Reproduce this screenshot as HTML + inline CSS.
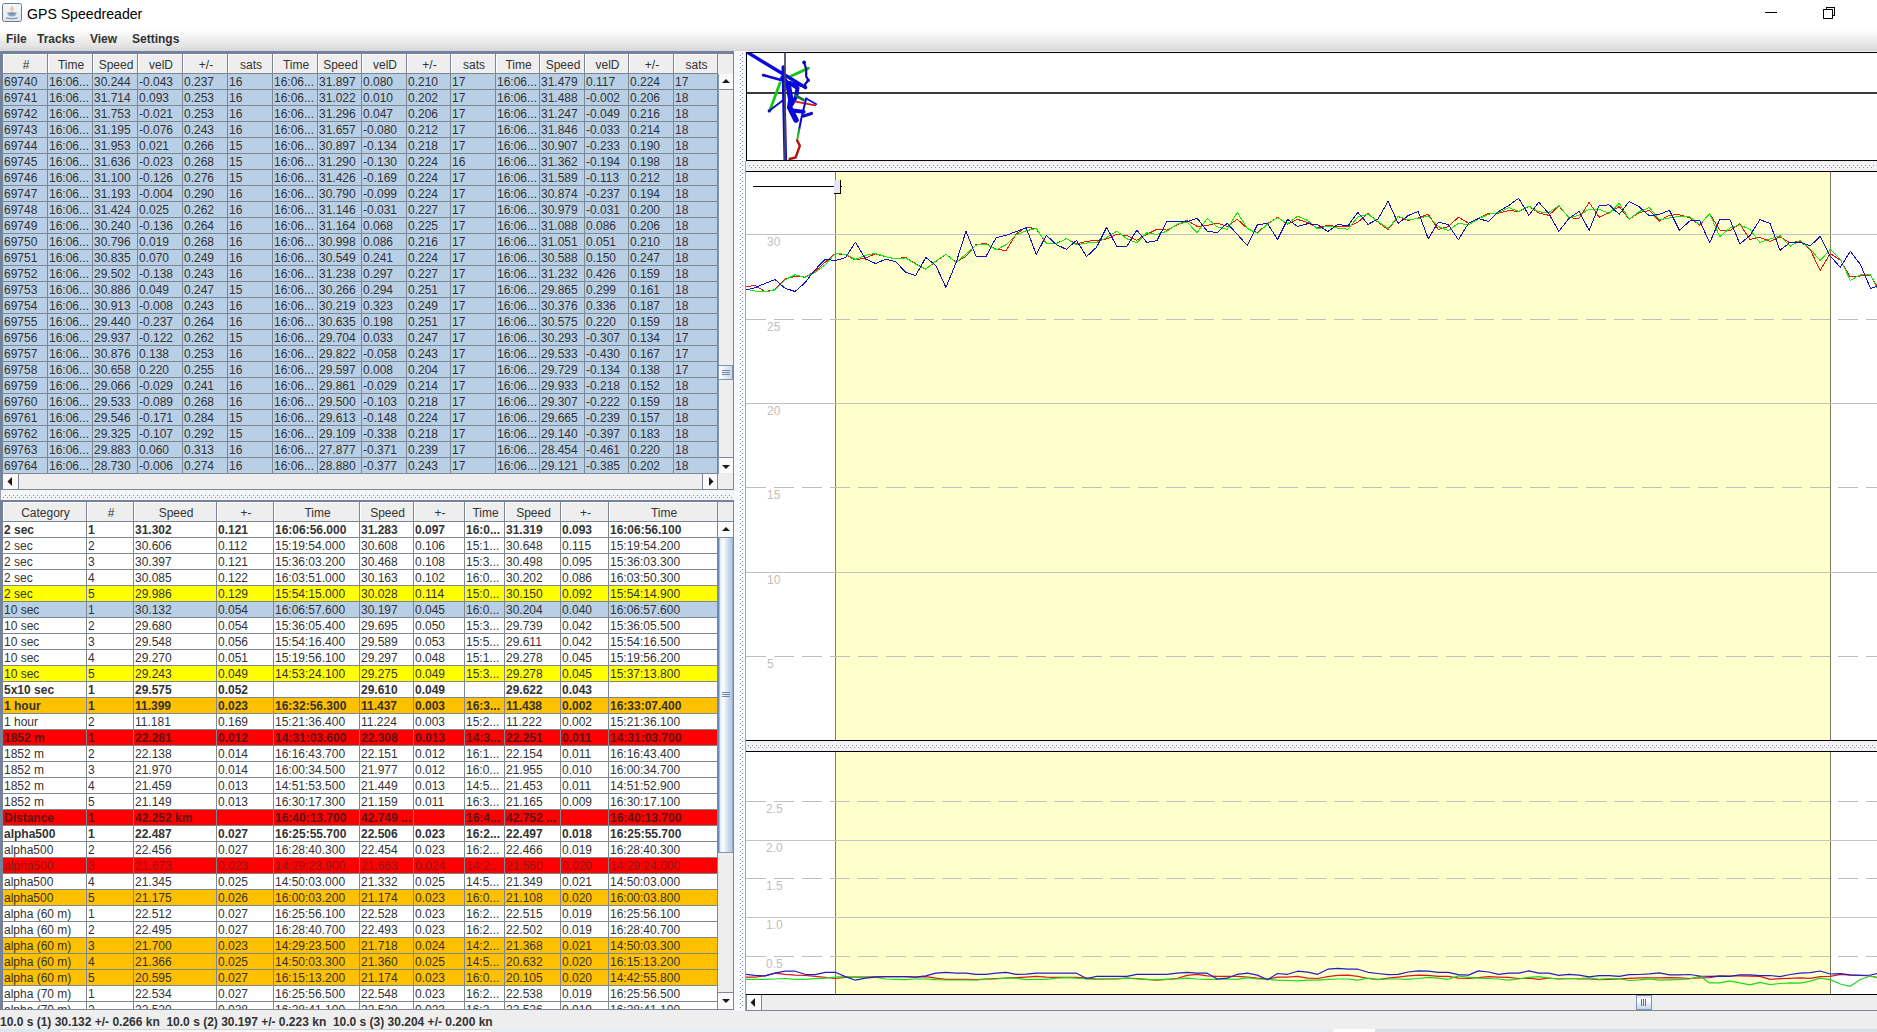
<!DOCTYPE html><html><head><meta charset="utf-8"><title>GPS Speedreader</title><style>

html,body{margin:0;padding:0}
body{width:1877px;height:1032px;overflow:hidden;background:#eeeeee;position:relative;font-family:"Liberation Sans",Arial,sans-serif;font-size:12px;color:#333}
.a{position:absolute}
.c{position:absolute;height:15px;line-height:17px;white-space:nowrap;overflow:hidden;box-sizing:border-box;padding-left:1px}
.h{position:absolute;height:19px;line-height:19px;padding-top:1px;padding-left:1px;text-align:center;white-space:nowrap;overflow:hidden;background:#eee;box-sizing:border-box;border-left:1px solid #fff;border-top:1px solid #fff}
.b{font-weight:bold}
.row{position:absolute;left:3px;height:15px}
.menu{font-weight:bold;position:absolute;top:32px;height:14px;line-height:14px}
.lbl{position:absolute;color:#c0c0c0;font-size:12px;line-height:12px}

</style></head><body>
<div class="a" style="left:0;top:0;width:1877px;height:27px;background:#fff"></div>
<svg class="a" style="left:2px;top:3px" width="20" height="19" viewBox="0 0 20 19">
<defs><linearGradient id="ig" x1="0" y1="0" x2="0" y2="1"><stop offset="0" stop-color="#f6fafd"/><stop offset="1" stop-color="#dde7f1"/></linearGradient></defs>
<rect x="0.5" y="0.5" width="19" height="18" rx="2" fill="url(#ig)" stroke="#6f7a86"/>
<path d="M10.6 2.6 C7.6 4.6 7.8 6.4 9.2 9 C12 8.4 12.800 5.600 10.600 2.600Z" fill="#f0caa4"/>
<path d="M5.2 9.6 Q10 8.6 14.6 9.600 Q14.200 13.500 10 13.500 Q5.600 13.500 5.200 9.600 Z" fill="#8fa6bf"/>
<path d="M6.5 10.6 Q10 9.800 13.400 10.600 Q10 12.200 6.500 10.600Z" fill="#6f8296"/>
<path d="M4 14.8 Q10 16.4 15.600 14.800" stroke="#8796a6" stroke-width="1.3" fill="none"/>
</svg>
<div class="a" style="left:27px;top:4px;font-size:15.5px;line-height:20px;color:#000;transform:scaleX(0.91);transform-origin:0 0" id="title">GPS Speedreader</div>
<div class="a" style="left:1765px;top:12px;width:12px;height:1px;background:#000"></div>
<div class="a" style="left:1823px;top:9px;width:8px;height:8px;border:1px solid #000;box-sizing:content-box;background:#fff;z-index:2"></div>
<div class="a" style="left:1826px;top:7px;width:7px;height:7px;border:1px solid #000;box-sizing:content-box;background:#fff;z-index:1"></div>
<div class="a" style="left:0;top:27px;width:1877px;height:23px;background:linear-gradient(#ffffff 0%,#fafafa 25%,#e2e2e2 85%,#d8d8d8 100%)"></div>
<div class="a" style="left:0;top:50px;width:1877px;height:1px;background:#d4d8e0"></div>
<div class="menu" style="left:6px">File</div>
<div class="menu" style="left:37px">Tracks</div>
<div class="menu" style="left:90px">View</div>
<div class="menu" style="left:132px">Settings</div>
<div class="a" style="left:0;top:51px;width:734px;height:439px;background:#75839a"></div>
<div class="a" style="left:3px;top:54px;width:715px;height:420px;background:#7c8791"></div>
<div class="h" style="left:3px;top:54px;width:44px">#</div>
<div class="h" style="left:48px;top:54px;width:44px">Time</div>
<div class="h" style="left:93px;top:54px;width:44px">Speed</div>
<div class="h" style="left:138px;top:54px;width:44px">velD</div>
<div class="h" style="left:183px;top:54px;width:44px">+/-</div>
<div class="h" style="left:228px;top:54px;width:44px">sats</div>
<div class="h" style="left:273px;top:54px;width:44px">Time</div>
<div class="h" style="left:318px;top:54px;width:43px">Speed</div>
<div class="h" style="left:362px;top:54px;width:44px">velD</div>
<div class="h" style="left:407px;top:54px;width:43px">+/-</div>
<div class="h" style="left:451px;top:54px;width:44px">sats</div>
<div class="h" style="left:496px;top:54px;width:43px">Time</div>
<div class="h" style="left:540px;top:54px;width:44px">Speed</div>
<div class="h" style="left:585px;top:54px;width:43px">velD</div>
<div class="h" style="left:629px;top:54px;width:44px">+/-</div>
<div class="h" style="left:674px;top:54px;width:43px">sats</div>
<div class="a" style="left:718px;top:54px;width:16px;height:20px;background:#eee"></div>
<div class="c" style="left:3px;top:74px;width:44px;background:#b8cfe5">69740</div>
<div class="c" style="left:48px;top:74px;width:44px;background:#b8cfe5">16:06...</div>
<div class="c" style="left:93px;top:74px;width:44px;background:#b8cfe5">30.244</div>
<div class="c" style="left:138px;top:74px;width:44px;background:#b8cfe5">-0.043</div>
<div class="c" style="left:183px;top:74px;width:44px;background:#b8cfe5">0.237</div>
<div class="c" style="left:228px;top:74px;width:44px;background:#b8cfe5">16</div>
<div class="c" style="left:273px;top:74px;width:44px;background:#b8cfe5">16:06...</div>
<div class="c" style="left:318px;top:74px;width:43px;background:#b8cfe5">31.897</div>
<div class="c" style="left:362px;top:74px;width:44px;background:#b8cfe5">0.080</div>
<div class="c" style="left:407px;top:74px;width:43px;background:#b8cfe5">0.210</div>
<div class="c" style="left:451px;top:74px;width:44px;background:#b8cfe5">17</div>
<div class="c" style="left:496px;top:74px;width:43px;background:#b8cfe5">16:06...</div>
<div class="c" style="left:540px;top:74px;width:44px;background:#b8cfe5">31.479</div>
<div class="c" style="left:585px;top:74px;width:43px;background:#b8cfe5">0.117</div>
<div class="c" style="left:629px;top:74px;width:44px;background:#b8cfe5">0.224</div>
<div class="c" style="left:674px;top:74px;width:43px;background:#b8cfe5">17</div>
<div class="c" style="left:3px;top:90px;width:44px;background:#b8cfe5">69741</div>
<div class="c" style="left:48px;top:90px;width:44px;background:#b8cfe5">16:06...</div>
<div class="c" style="left:93px;top:90px;width:44px;background:#b8cfe5">31.714</div>
<div class="c" style="left:138px;top:90px;width:44px;background:#b8cfe5">0.093</div>
<div class="c" style="left:183px;top:90px;width:44px;background:#b8cfe5">0.253</div>
<div class="c" style="left:228px;top:90px;width:44px;background:#b8cfe5">16</div>
<div class="c" style="left:273px;top:90px;width:44px;background:#b8cfe5">16:06...</div>
<div class="c" style="left:318px;top:90px;width:43px;background:#b8cfe5">31.022</div>
<div class="c" style="left:362px;top:90px;width:44px;background:#b8cfe5">0.010</div>
<div class="c" style="left:407px;top:90px;width:43px;background:#b8cfe5">0.202</div>
<div class="c" style="left:451px;top:90px;width:44px;background:#b8cfe5">17</div>
<div class="c" style="left:496px;top:90px;width:43px;background:#b8cfe5">16:06...</div>
<div class="c" style="left:540px;top:90px;width:44px;background:#b8cfe5">31.488</div>
<div class="c" style="left:585px;top:90px;width:43px;background:#b8cfe5">-0.002</div>
<div class="c" style="left:629px;top:90px;width:44px;background:#b8cfe5">0.206</div>
<div class="c" style="left:674px;top:90px;width:43px;background:#b8cfe5">18</div>
<div class="c" style="left:3px;top:106px;width:44px;background:#b8cfe5">69742</div>
<div class="c" style="left:48px;top:106px;width:44px;background:#b8cfe5">16:06...</div>
<div class="c" style="left:93px;top:106px;width:44px;background:#b8cfe5">31.753</div>
<div class="c" style="left:138px;top:106px;width:44px;background:#b8cfe5">-0.021</div>
<div class="c" style="left:183px;top:106px;width:44px;background:#b8cfe5">0.253</div>
<div class="c" style="left:228px;top:106px;width:44px;background:#b8cfe5">16</div>
<div class="c" style="left:273px;top:106px;width:44px;background:#b8cfe5">16:06...</div>
<div class="c" style="left:318px;top:106px;width:43px;background:#b8cfe5">31.296</div>
<div class="c" style="left:362px;top:106px;width:44px;background:#b8cfe5">0.047</div>
<div class="c" style="left:407px;top:106px;width:43px;background:#b8cfe5">0.206</div>
<div class="c" style="left:451px;top:106px;width:44px;background:#b8cfe5">17</div>
<div class="c" style="left:496px;top:106px;width:43px;background:#b8cfe5">16:06...</div>
<div class="c" style="left:540px;top:106px;width:44px;background:#b8cfe5">31.247</div>
<div class="c" style="left:585px;top:106px;width:43px;background:#b8cfe5">-0.049</div>
<div class="c" style="left:629px;top:106px;width:44px;background:#b8cfe5">0.216</div>
<div class="c" style="left:674px;top:106px;width:43px;background:#b8cfe5">18</div>
<div class="c" style="left:3px;top:122px;width:44px;background:#b8cfe5">69743</div>
<div class="c" style="left:48px;top:122px;width:44px;background:#b8cfe5">16:06...</div>
<div class="c" style="left:93px;top:122px;width:44px;background:#b8cfe5">31.195</div>
<div class="c" style="left:138px;top:122px;width:44px;background:#b8cfe5">-0.076</div>
<div class="c" style="left:183px;top:122px;width:44px;background:#b8cfe5">0.243</div>
<div class="c" style="left:228px;top:122px;width:44px;background:#b8cfe5">16</div>
<div class="c" style="left:273px;top:122px;width:44px;background:#b8cfe5">16:06...</div>
<div class="c" style="left:318px;top:122px;width:43px;background:#b8cfe5">31.657</div>
<div class="c" style="left:362px;top:122px;width:44px;background:#b8cfe5">-0.080</div>
<div class="c" style="left:407px;top:122px;width:43px;background:#b8cfe5">0.212</div>
<div class="c" style="left:451px;top:122px;width:44px;background:#b8cfe5">17</div>
<div class="c" style="left:496px;top:122px;width:43px;background:#b8cfe5">16:06...</div>
<div class="c" style="left:540px;top:122px;width:44px;background:#b8cfe5">31.846</div>
<div class="c" style="left:585px;top:122px;width:43px;background:#b8cfe5">-0.033</div>
<div class="c" style="left:629px;top:122px;width:44px;background:#b8cfe5">0.214</div>
<div class="c" style="left:674px;top:122px;width:43px;background:#b8cfe5">18</div>
<div class="c" style="left:3px;top:138px;width:44px;background:#b8cfe5">69744</div>
<div class="c" style="left:48px;top:138px;width:44px;background:#b8cfe5">16:06...</div>
<div class="c" style="left:93px;top:138px;width:44px;background:#b8cfe5">31.953</div>
<div class="c" style="left:138px;top:138px;width:44px;background:#b8cfe5">0.021</div>
<div class="c" style="left:183px;top:138px;width:44px;background:#b8cfe5">0.266</div>
<div class="c" style="left:228px;top:138px;width:44px;background:#b8cfe5">15</div>
<div class="c" style="left:273px;top:138px;width:44px;background:#b8cfe5">16:06...</div>
<div class="c" style="left:318px;top:138px;width:43px;background:#b8cfe5">30.897</div>
<div class="c" style="left:362px;top:138px;width:44px;background:#b8cfe5">-0.134</div>
<div class="c" style="left:407px;top:138px;width:43px;background:#b8cfe5">0.218</div>
<div class="c" style="left:451px;top:138px;width:44px;background:#b8cfe5">17</div>
<div class="c" style="left:496px;top:138px;width:43px;background:#b8cfe5">16:06...</div>
<div class="c" style="left:540px;top:138px;width:44px;background:#b8cfe5">30.907</div>
<div class="c" style="left:585px;top:138px;width:43px;background:#b8cfe5">-0.233</div>
<div class="c" style="left:629px;top:138px;width:44px;background:#b8cfe5">0.190</div>
<div class="c" style="left:674px;top:138px;width:43px;background:#b8cfe5">18</div>
<div class="c" style="left:3px;top:154px;width:44px;background:#b8cfe5">69745</div>
<div class="c" style="left:48px;top:154px;width:44px;background:#b8cfe5">16:06...</div>
<div class="c" style="left:93px;top:154px;width:44px;background:#b8cfe5">31.636</div>
<div class="c" style="left:138px;top:154px;width:44px;background:#b8cfe5">-0.023</div>
<div class="c" style="left:183px;top:154px;width:44px;background:#b8cfe5">0.268</div>
<div class="c" style="left:228px;top:154px;width:44px;background:#b8cfe5">15</div>
<div class="c" style="left:273px;top:154px;width:44px;background:#b8cfe5">16:06...</div>
<div class="c" style="left:318px;top:154px;width:43px;background:#b8cfe5">31.290</div>
<div class="c" style="left:362px;top:154px;width:44px;background:#b8cfe5">-0.130</div>
<div class="c" style="left:407px;top:154px;width:43px;background:#b8cfe5">0.224</div>
<div class="c" style="left:451px;top:154px;width:44px;background:#b8cfe5">16</div>
<div class="c" style="left:496px;top:154px;width:43px;background:#b8cfe5">16:06...</div>
<div class="c" style="left:540px;top:154px;width:44px;background:#b8cfe5">31.362</div>
<div class="c" style="left:585px;top:154px;width:43px;background:#b8cfe5">-0.194</div>
<div class="c" style="left:629px;top:154px;width:44px;background:#b8cfe5">0.198</div>
<div class="c" style="left:674px;top:154px;width:43px;background:#b8cfe5">18</div>
<div class="c" style="left:3px;top:170px;width:44px;background:#b8cfe5">69746</div>
<div class="c" style="left:48px;top:170px;width:44px;background:#b8cfe5">16:06...</div>
<div class="c" style="left:93px;top:170px;width:44px;background:#b8cfe5">31.100</div>
<div class="c" style="left:138px;top:170px;width:44px;background:#b8cfe5">-0.126</div>
<div class="c" style="left:183px;top:170px;width:44px;background:#b8cfe5">0.276</div>
<div class="c" style="left:228px;top:170px;width:44px;background:#b8cfe5">15</div>
<div class="c" style="left:273px;top:170px;width:44px;background:#b8cfe5">16:06...</div>
<div class="c" style="left:318px;top:170px;width:43px;background:#b8cfe5">31.426</div>
<div class="c" style="left:362px;top:170px;width:44px;background:#b8cfe5">-0.169</div>
<div class="c" style="left:407px;top:170px;width:43px;background:#b8cfe5">0.224</div>
<div class="c" style="left:451px;top:170px;width:44px;background:#b8cfe5">17</div>
<div class="c" style="left:496px;top:170px;width:43px;background:#b8cfe5">16:06...</div>
<div class="c" style="left:540px;top:170px;width:44px;background:#b8cfe5">31.589</div>
<div class="c" style="left:585px;top:170px;width:43px;background:#b8cfe5">-0.113</div>
<div class="c" style="left:629px;top:170px;width:44px;background:#b8cfe5">0.212</div>
<div class="c" style="left:674px;top:170px;width:43px;background:#b8cfe5">18</div>
<div class="c" style="left:3px;top:186px;width:44px;background:#b8cfe5">69747</div>
<div class="c" style="left:48px;top:186px;width:44px;background:#b8cfe5">16:06...</div>
<div class="c" style="left:93px;top:186px;width:44px;background:#b8cfe5">31.193</div>
<div class="c" style="left:138px;top:186px;width:44px;background:#b8cfe5">-0.004</div>
<div class="c" style="left:183px;top:186px;width:44px;background:#b8cfe5">0.290</div>
<div class="c" style="left:228px;top:186px;width:44px;background:#b8cfe5">16</div>
<div class="c" style="left:273px;top:186px;width:44px;background:#b8cfe5">16:06...</div>
<div class="c" style="left:318px;top:186px;width:43px;background:#b8cfe5">30.790</div>
<div class="c" style="left:362px;top:186px;width:44px;background:#b8cfe5">-0.099</div>
<div class="c" style="left:407px;top:186px;width:43px;background:#b8cfe5">0.224</div>
<div class="c" style="left:451px;top:186px;width:44px;background:#b8cfe5">17</div>
<div class="c" style="left:496px;top:186px;width:43px;background:#b8cfe5">16:06...</div>
<div class="c" style="left:540px;top:186px;width:44px;background:#b8cfe5">30.874</div>
<div class="c" style="left:585px;top:186px;width:43px;background:#b8cfe5">-0.237</div>
<div class="c" style="left:629px;top:186px;width:44px;background:#b8cfe5">0.194</div>
<div class="c" style="left:674px;top:186px;width:43px;background:#b8cfe5">18</div>
<div class="c" style="left:3px;top:202px;width:44px;background:#b8cfe5">69748</div>
<div class="c" style="left:48px;top:202px;width:44px;background:#b8cfe5">16:06...</div>
<div class="c" style="left:93px;top:202px;width:44px;background:#b8cfe5">31.424</div>
<div class="c" style="left:138px;top:202px;width:44px;background:#b8cfe5">0.025</div>
<div class="c" style="left:183px;top:202px;width:44px;background:#b8cfe5">0.262</div>
<div class="c" style="left:228px;top:202px;width:44px;background:#b8cfe5">16</div>
<div class="c" style="left:273px;top:202px;width:44px;background:#b8cfe5">16:06...</div>
<div class="c" style="left:318px;top:202px;width:43px;background:#b8cfe5">31.146</div>
<div class="c" style="left:362px;top:202px;width:44px;background:#b8cfe5">-0.031</div>
<div class="c" style="left:407px;top:202px;width:43px;background:#b8cfe5">0.227</div>
<div class="c" style="left:451px;top:202px;width:44px;background:#b8cfe5">17</div>
<div class="c" style="left:496px;top:202px;width:43px;background:#b8cfe5">16:06...</div>
<div class="c" style="left:540px;top:202px;width:44px;background:#b8cfe5">30.979</div>
<div class="c" style="left:585px;top:202px;width:43px;background:#b8cfe5">-0.031</div>
<div class="c" style="left:629px;top:202px;width:44px;background:#b8cfe5">0.200</div>
<div class="c" style="left:674px;top:202px;width:43px;background:#b8cfe5">18</div>
<div class="c" style="left:3px;top:218px;width:44px;background:#b8cfe5">69749</div>
<div class="c" style="left:48px;top:218px;width:44px;background:#b8cfe5">16:06...</div>
<div class="c" style="left:93px;top:218px;width:44px;background:#b8cfe5">30.240</div>
<div class="c" style="left:138px;top:218px;width:44px;background:#b8cfe5">-0.136</div>
<div class="c" style="left:183px;top:218px;width:44px;background:#b8cfe5">0.264</div>
<div class="c" style="left:228px;top:218px;width:44px;background:#b8cfe5">16</div>
<div class="c" style="left:273px;top:218px;width:44px;background:#b8cfe5">16:06...</div>
<div class="c" style="left:318px;top:218px;width:43px;background:#b8cfe5">31.164</div>
<div class="c" style="left:362px;top:218px;width:44px;background:#b8cfe5">0.068</div>
<div class="c" style="left:407px;top:218px;width:43px;background:#b8cfe5">0.225</div>
<div class="c" style="left:451px;top:218px;width:44px;background:#b8cfe5">17</div>
<div class="c" style="left:496px;top:218px;width:43px;background:#b8cfe5">16:06...</div>
<div class="c" style="left:540px;top:218px;width:44px;background:#b8cfe5">31.088</div>
<div class="c" style="left:585px;top:218px;width:43px;background:#b8cfe5">0.086</div>
<div class="c" style="left:629px;top:218px;width:44px;background:#b8cfe5">0.206</div>
<div class="c" style="left:674px;top:218px;width:43px;background:#b8cfe5">18</div>
<div class="c" style="left:3px;top:234px;width:44px;background:#b8cfe5">69750</div>
<div class="c" style="left:48px;top:234px;width:44px;background:#b8cfe5">16:06...</div>
<div class="c" style="left:93px;top:234px;width:44px;background:#b8cfe5">30.796</div>
<div class="c" style="left:138px;top:234px;width:44px;background:#b8cfe5">0.019</div>
<div class="c" style="left:183px;top:234px;width:44px;background:#b8cfe5">0.268</div>
<div class="c" style="left:228px;top:234px;width:44px;background:#b8cfe5">16</div>
<div class="c" style="left:273px;top:234px;width:44px;background:#b8cfe5">16:06...</div>
<div class="c" style="left:318px;top:234px;width:43px;background:#b8cfe5">30.998</div>
<div class="c" style="left:362px;top:234px;width:44px;background:#b8cfe5">0.086</div>
<div class="c" style="left:407px;top:234px;width:43px;background:#b8cfe5">0.216</div>
<div class="c" style="left:451px;top:234px;width:44px;background:#b8cfe5">17</div>
<div class="c" style="left:496px;top:234px;width:43px;background:#b8cfe5">16:06...</div>
<div class="c" style="left:540px;top:234px;width:44px;background:#b8cfe5">31.051</div>
<div class="c" style="left:585px;top:234px;width:43px;background:#b8cfe5">0.051</div>
<div class="c" style="left:629px;top:234px;width:44px;background:#b8cfe5">0.210</div>
<div class="c" style="left:674px;top:234px;width:43px;background:#b8cfe5">18</div>
<div class="c" style="left:3px;top:250px;width:44px;background:#b8cfe5">69751</div>
<div class="c" style="left:48px;top:250px;width:44px;background:#b8cfe5">16:06...</div>
<div class="c" style="left:93px;top:250px;width:44px;background:#b8cfe5">30.835</div>
<div class="c" style="left:138px;top:250px;width:44px;background:#b8cfe5">0.070</div>
<div class="c" style="left:183px;top:250px;width:44px;background:#b8cfe5">0.249</div>
<div class="c" style="left:228px;top:250px;width:44px;background:#b8cfe5">16</div>
<div class="c" style="left:273px;top:250px;width:44px;background:#b8cfe5">16:06...</div>
<div class="c" style="left:318px;top:250px;width:43px;background:#b8cfe5">30.549</div>
<div class="c" style="left:362px;top:250px;width:44px;background:#b8cfe5">0.241</div>
<div class="c" style="left:407px;top:250px;width:43px;background:#b8cfe5">0.224</div>
<div class="c" style="left:451px;top:250px;width:44px;background:#b8cfe5">17</div>
<div class="c" style="left:496px;top:250px;width:43px;background:#b8cfe5">16:06...</div>
<div class="c" style="left:540px;top:250px;width:44px;background:#b8cfe5">30.588</div>
<div class="c" style="left:585px;top:250px;width:43px;background:#b8cfe5">0.150</div>
<div class="c" style="left:629px;top:250px;width:44px;background:#b8cfe5">0.247</div>
<div class="c" style="left:674px;top:250px;width:43px;background:#b8cfe5">18</div>
<div class="c" style="left:3px;top:266px;width:44px;background:#b8cfe5">69752</div>
<div class="c" style="left:48px;top:266px;width:44px;background:#b8cfe5">16:06...</div>
<div class="c" style="left:93px;top:266px;width:44px;background:#b8cfe5">29.502</div>
<div class="c" style="left:138px;top:266px;width:44px;background:#b8cfe5">-0.138</div>
<div class="c" style="left:183px;top:266px;width:44px;background:#b8cfe5">0.243</div>
<div class="c" style="left:228px;top:266px;width:44px;background:#b8cfe5">16</div>
<div class="c" style="left:273px;top:266px;width:44px;background:#b8cfe5">16:06...</div>
<div class="c" style="left:318px;top:266px;width:43px;background:#b8cfe5">31.238</div>
<div class="c" style="left:362px;top:266px;width:44px;background:#b8cfe5">0.297</div>
<div class="c" style="left:407px;top:266px;width:43px;background:#b8cfe5">0.227</div>
<div class="c" style="left:451px;top:266px;width:44px;background:#b8cfe5">17</div>
<div class="c" style="left:496px;top:266px;width:43px;background:#b8cfe5">16:06...</div>
<div class="c" style="left:540px;top:266px;width:44px;background:#b8cfe5">31.232</div>
<div class="c" style="left:585px;top:266px;width:43px;background:#b8cfe5">0.426</div>
<div class="c" style="left:629px;top:266px;width:44px;background:#b8cfe5">0.159</div>
<div class="c" style="left:674px;top:266px;width:43px;background:#b8cfe5">18</div>
<div class="c" style="left:3px;top:282px;width:44px;background:#b8cfe5">69753</div>
<div class="c" style="left:48px;top:282px;width:44px;background:#b8cfe5">16:06...</div>
<div class="c" style="left:93px;top:282px;width:44px;background:#b8cfe5">30.886</div>
<div class="c" style="left:138px;top:282px;width:44px;background:#b8cfe5">0.049</div>
<div class="c" style="left:183px;top:282px;width:44px;background:#b8cfe5">0.247</div>
<div class="c" style="left:228px;top:282px;width:44px;background:#b8cfe5">15</div>
<div class="c" style="left:273px;top:282px;width:44px;background:#b8cfe5">16:06...</div>
<div class="c" style="left:318px;top:282px;width:43px;background:#b8cfe5">30.266</div>
<div class="c" style="left:362px;top:282px;width:44px;background:#b8cfe5">0.294</div>
<div class="c" style="left:407px;top:282px;width:43px;background:#b8cfe5">0.251</div>
<div class="c" style="left:451px;top:282px;width:44px;background:#b8cfe5">17</div>
<div class="c" style="left:496px;top:282px;width:43px;background:#b8cfe5">16:06...</div>
<div class="c" style="left:540px;top:282px;width:44px;background:#b8cfe5">29.865</div>
<div class="c" style="left:585px;top:282px;width:43px;background:#b8cfe5">0.299</div>
<div class="c" style="left:629px;top:282px;width:44px;background:#b8cfe5">0.161</div>
<div class="c" style="left:674px;top:282px;width:43px;background:#b8cfe5">18</div>
<div class="c" style="left:3px;top:298px;width:44px;background:#b8cfe5">69754</div>
<div class="c" style="left:48px;top:298px;width:44px;background:#b8cfe5">16:06...</div>
<div class="c" style="left:93px;top:298px;width:44px;background:#b8cfe5">30.913</div>
<div class="c" style="left:138px;top:298px;width:44px;background:#b8cfe5">-0.008</div>
<div class="c" style="left:183px;top:298px;width:44px;background:#b8cfe5">0.243</div>
<div class="c" style="left:228px;top:298px;width:44px;background:#b8cfe5">16</div>
<div class="c" style="left:273px;top:298px;width:44px;background:#b8cfe5">16:06...</div>
<div class="c" style="left:318px;top:298px;width:43px;background:#b8cfe5">30.219</div>
<div class="c" style="left:362px;top:298px;width:44px;background:#b8cfe5">0.323</div>
<div class="c" style="left:407px;top:298px;width:43px;background:#b8cfe5">0.249</div>
<div class="c" style="left:451px;top:298px;width:44px;background:#b8cfe5">17</div>
<div class="c" style="left:496px;top:298px;width:43px;background:#b8cfe5">16:06...</div>
<div class="c" style="left:540px;top:298px;width:44px;background:#b8cfe5">30.376</div>
<div class="c" style="left:585px;top:298px;width:43px;background:#b8cfe5">0.336</div>
<div class="c" style="left:629px;top:298px;width:44px;background:#b8cfe5">0.187</div>
<div class="c" style="left:674px;top:298px;width:43px;background:#b8cfe5">18</div>
<div class="c" style="left:3px;top:314px;width:44px;background:#b8cfe5">69755</div>
<div class="c" style="left:48px;top:314px;width:44px;background:#b8cfe5">16:06...</div>
<div class="c" style="left:93px;top:314px;width:44px;background:#b8cfe5">29.440</div>
<div class="c" style="left:138px;top:314px;width:44px;background:#b8cfe5">-0.237</div>
<div class="c" style="left:183px;top:314px;width:44px;background:#b8cfe5">0.264</div>
<div class="c" style="left:228px;top:314px;width:44px;background:#b8cfe5">16</div>
<div class="c" style="left:273px;top:314px;width:44px;background:#b8cfe5">16:06...</div>
<div class="c" style="left:318px;top:314px;width:43px;background:#b8cfe5">30.635</div>
<div class="c" style="left:362px;top:314px;width:44px;background:#b8cfe5">0.198</div>
<div class="c" style="left:407px;top:314px;width:43px;background:#b8cfe5">0.251</div>
<div class="c" style="left:451px;top:314px;width:44px;background:#b8cfe5">17</div>
<div class="c" style="left:496px;top:314px;width:43px;background:#b8cfe5">16:06...</div>
<div class="c" style="left:540px;top:314px;width:44px;background:#b8cfe5">30.575</div>
<div class="c" style="left:585px;top:314px;width:43px;background:#b8cfe5">0.220</div>
<div class="c" style="left:629px;top:314px;width:44px;background:#b8cfe5">0.159</div>
<div class="c" style="left:674px;top:314px;width:43px;background:#b8cfe5">18</div>
<div class="c" style="left:3px;top:330px;width:44px;background:#b8cfe5">69756</div>
<div class="c" style="left:48px;top:330px;width:44px;background:#b8cfe5">16:06...</div>
<div class="c" style="left:93px;top:330px;width:44px;background:#b8cfe5">29.937</div>
<div class="c" style="left:138px;top:330px;width:44px;background:#b8cfe5">-0.122</div>
<div class="c" style="left:183px;top:330px;width:44px;background:#b8cfe5">0.262</div>
<div class="c" style="left:228px;top:330px;width:44px;background:#b8cfe5">15</div>
<div class="c" style="left:273px;top:330px;width:44px;background:#b8cfe5">16:06...</div>
<div class="c" style="left:318px;top:330px;width:43px;background:#b8cfe5">29.704</div>
<div class="c" style="left:362px;top:330px;width:44px;background:#b8cfe5">0.033</div>
<div class="c" style="left:407px;top:330px;width:43px;background:#b8cfe5">0.247</div>
<div class="c" style="left:451px;top:330px;width:44px;background:#b8cfe5">17</div>
<div class="c" style="left:496px;top:330px;width:43px;background:#b8cfe5">16:06...</div>
<div class="c" style="left:540px;top:330px;width:44px;background:#b8cfe5">30.293</div>
<div class="c" style="left:585px;top:330px;width:43px;background:#b8cfe5">-0.307</div>
<div class="c" style="left:629px;top:330px;width:44px;background:#b8cfe5">0.134</div>
<div class="c" style="left:674px;top:330px;width:43px;background:#b8cfe5">17</div>
<div class="c" style="left:3px;top:346px;width:44px;background:#b8cfe5">69757</div>
<div class="c" style="left:48px;top:346px;width:44px;background:#b8cfe5">16:06...</div>
<div class="c" style="left:93px;top:346px;width:44px;background:#b8cfe5">30.876</div>
<div class="c" style="left:138px;top:346px;width:44px;background:#b8cfe5">0.138</div>
<div class="c" style="left:183px;top:346px;width:44px;background:#b8cfe5">0.253</div>
<div class="c" style="left:228px;top:346px;width:44px;background:#b8cfe5">16</div>
<div class="c" style="left:273px;top:346px;width:44px;background:#b8cfe5">16:06...</div>
<div class="c" style="left:318px;top:346px;width:43px;background:#b8cfe5">29.822</div>
<div class="c" style="left:362px;top:346px;width:44px;background:#b8cfe5">-0.058</div>
<div class="c" style="left:407px;top:346px;width:43px;background:#b8cfe5">0.243</div>
<div class="c" style="left:451px;top:346px;width:44px;background:#b8cfe5">17</div>
<div class="c" style="left:496px;top:346px;width:43px;background:#b8cfe5">16:06...</div>
<div class="c" style="left:540px;top:346px;width:44px;background:#b8cfe5">29.533</div>
<div class="c" style="left:585px;top:346px;width:43px;background:#b8cfe5">-0.430</div>
<div class="c" style="left:629px;top:346px;width:44px;background:#b8cfe5">0.167</div>
<div class="c" style="left:674px;top:346px;width:43px;background:#b8cfe5">17</div>
<div class="c" style="left:3px;top:362px;width:44px;background:#b8cfe5">69758</div>
<div class="c" style="left:48px;top:362px;width:44px;background:#b8cfe5">16:06...</div>
<div class="c" style="left:93px;top:362px;width:44px;background:#b8cfe5">30.658</div>
<div class="c" style="left:138px;top:362px;width:44px;background:#b8cfe5">0.220</div>
<div class="c" style="left:183px;top:362px;width:44px;background:#b8cfe5">0.255</div>
<div class="c" style="left:228px;top:362px;width:44px;background:#b8cfe5">16</div>
<div class="c" style="left:273px;top:362px;width:44px;background:#b8cfe5">16:06...</div>
<div class="c" style="left:318px;top:362px;width:43px;background:#b8cfe5">29.597</div>
<div class="c" style="left:362px;top:362px;width:44px;background:#b8cfe5">0.008</div>
<div class="c" style="left:407px;top:362px;width:43px;background:#b8cfe5">0.204</div>
<div class="c" style="left:451px;top:362px;width:44px;background:#b8cfe5">17</div>
<div class="c" style="left:496px;top:362px;width:43px;background:#b8cfe5">16:06...</div>
<div class="c" style="left:540px;top:362px;width:44px;background:#b8cfe5">29.729</div>
<div class="c" style="left:585px;top:362px;width:43px;background:#b8cfe5">-0.134</div>
<div class="c" style="left:629px;top:362px;width:44px;background:#b8cfe5">0.138</div>
<div class="c" style="left:674px;top:362px;width:43px;background:#b8cfe5">17</div>
<div class="c" style="left:3px;top:378px;width:44px;background:#b8cfe5">69759</div>
<div class="c" style="left:48px;top:378px;width:44px;background:#b8cfe5">16:06...</div>
<div class="c" style="left:93px;top:378px;width:44px;background:#b8cfe5">29.066</div>
<div class="c" style="left:138px;top:378px;width:44px;background:#b8cfe5">-0.029</div>
<div class="c" style="left:183px;top:378px;width:44px;background:#b8cfe5">0.241</div>
<div class="c" style="left:228px;top:378px;width:44px;background:#b8cfe5">16</div>
<div class="c" style="left:273px;top:378px;width:44px;background:#b8cfe5">16:06...</div>
<div class="c" style="left:318px;top:378px;width:43px;background:#b8cfe5">29.861</div>
<div class="c" style="left:362px;top:378px;width:44px;background:#b8cfe5">-0.029</div>
<div class="c" style="left:407px;top:378px;width:43px;background:#b8cfe5">0.214</div>
<div class="c" style="left:451px;top:378px;width:44px;background:#b8cfe5">17</div>
<div class="c" style="left:496px;top:378px;width:43px;background:#b8cfe5">16:06...</div>
<div class="c" style="left:540px;top:378px;width:44px;background:#b8cfe5">29.933</div>
<div class="c" style="left:585px;top:378px;width:43px;background:#b8cfe5">-0.218</div>
<div class="c" style="left:629px;top:378px;width:44px;background:#b8cfe5">0.152</div>
<div class="c" style="left:674px;top:378px;width:43px;background:#b8cfe5">18</div>
<div class="c" style="left:3px;top:394px;width:44px;background:#b8cfe5">69760</div>
<div class="c" style="left:48px;top:394px;width:44px;background:#b8cfe5">16:06...</div>
<div class="c" style="left:93px;top:394px;width:44px;background:#b8cfe5">29.533</div>
<div class="c" style="left:138px;top:394px;width:44px;background:#b8cfe5">-0.089</div>
<div class="c" style="left:183px;top:394px;width:44px;background:#b8cfe5">0.268</div>
<div class="c" style="left:228px;top:394px;width:44px;background:#b8cfe5">16</div>
<div class="c" style="left:273px;top:394px;width:44px;background:#b8cfe5">16:06...</div>
<div class="c" style="left:318px;top:394px;width:43px;background:#b8cfe5">29.500</div>
<div class="c" style="left:362px;top:394px;width:44px;background:#b8cfe5">-0.103</div>
<div class="c" style="left:407px;top:394px;width:43px;background:#b8cfe5">0.218</div>
<div class="c" style="left:451px;top:394px;width:44px;background:#b8cfe5">17</div>
<div class="c" style="left:496px;top:394px;width:43px;background:#b8cfe5">16:06...</div>
<div class="c" style="left:540px;top:394px;width:44px;background:#b8cfe5">29.307</div>
<div class="c" style="left:585px;top:394px;width:43px;background:#b8cfe5">-0.222</div>
<div class="c" style="left:629px;top:394px;width:44px;background:#b8cfe5">0.159</div>
<div class="c" style="left:674px;top:394px;width:43px;background:#b8cfe5">18</div>
<div class="c" style="left:3px;top:410px;width:44px;background:#b8cfe5">69761</div>
<div class="c" style="left:48px;top:410px;width:44px;background:#b8cfe5">16:06...</div>
<div class="c" style="left:93px;top:410px;width:44px;background:#b8cfe5">29.546</div>
<div class="c" style="left:138px;top:410px;width:44px;background:#b8cfe5">-0.171</div>
<div class="c" style="left:183px;top:410px;width:44px;background:#b8cfe5">0.284</div>
<div class="c" style="left:228px;top:410px;width:44px;background:#b8cfe5">15</div>
<div class="c" style="left:273px;top:410px;width:44px;background:#b8cfe5">16:06...</div>
<div class="c" style="left:318px;top:410px;width:43px;background:#b8cfe5">29.613</div>
<div class="c" style="left:362px;top:410px;width:44px;background:#b8cfe5">-0.148</div>
<div class="c" style="left:407px;top:410px;width:43px;background:#b8cfe5">0.224</div>
<div class="c" style="left:451px;top:410px;width:44px;background:#b8cfe5">17</div>
<div class="c" style="left:496px;top:410px;width:43px;background:#b8cfe5">16:06...</div>
<div class="c" style="left:540px;top:410px;width:44px;background:#b8cfe5">29.665</div>
<div class="c" style="left:585px;top:410px;width:43px;background:#b8cfe5">-0.239</div>
<div class="c" style="left:629px;top:410px;width:44px;background:#b8cfe5">0.157</div>
<div class="c" style="left:674px;top:410px;width:43px;background:#b8cfe5">18</div>
<div class="c" style="left:3px;top:426px;width:44px;background:#b8cfe5">69762</div>
<div class="c" style="left:48px;top:426px;width:44px;background:#b8cfe5">16:06...</div>
<div class="c" style="left:93px;top:426px;width:44px;background:#b8cfe5">29.325</div>
<div class="c" style="left:138px;top:426px;width:44px;background:#b8cfe5">-0.107</div>
<div class="c" style="left:183px;top:426px;width:44px;background:#b8cfe5">0.292</div>
<div class="c" style="left:228px;top:426px;width:44px;background:#b8cfe5">15</div>
<div class="c" style="left:273px;top:426px;width:44px;background:#b8cfe5">16:06...</div>
<div class="c" style="left:318px;top:426px;width:43px;background:#b8cfe5">29.109</div>
<div class="c" style="left:362px;top:426px;width:44px;background:#b8cfe5">-0.338</div>
<div class="c" style="left:407px;top:426px;width:43px;background:#b8cfe5">0.218</div>
<div class="c" style="left:451px;top:426px;width:44px;background:#b8cfe5">17</div>
<div class="c" style="left:496px;top:426px;width:43px;background:#b8cfe5">16:06...</div>
<div class="c" style="left:540px;top:426px;width:44px;background:#b8cfe5">29.140</div>
<div class="c" style="left:585px;top:426px;width:43px;background:#b8cfe5">-0.397</div>
<div class="c" style="left:629px;top:426px;width:44px;background:#b8cfe5">0.183</div>
<div class="c" style="left:674px;top:426px;width:43px;background:#b8cfe5">18</div>
<div class="c" style="left:3px;top:442px;width:44px;background:#b8cfe5">69763</div>
<div class="c" style="left:48px;top:442px;width:44px;background:#b8cfe5">16:06...</div>
<div class="c" style="left:93px;top:442px;width:44px;background:#b8cfe5">29.883</div>
<div class="c" style="left:138px;top:442px;width:44px;background:#b8cfe5">0.060</div>
<div class="c" style="left:183px;top:442px;width:44px;background:#b8cfe5">0.313</div>
<div class="c" style="left:228px;top:442px;width:44px;background:#b8cfe5">16</div>
<div class="c" style="left:273px;top:442px;width:44px;background:#b8cfe5">16:06...</div>
<div class="c" style="left:318px;top:442px;width:43px;background:#b8cfe5">27.877</div>
<div class="c" style="left:362px;top:442px;width:44px;background:#b8cfe5">-0.371</div>
<div class="c" style="left:407px;top:442px;width:43px;background:#b8cfe5">0.239</div>
<div class="c" style="left:451px;top:442px;width:44px;background:#b8cfe5">17</div>
<div class="c" style="left:496px;top:442px;width:43px;background:#b8cfe5">16:06...</div>
<div class="c" style="left:540px;top:442px;width:44px;background:#b8cfe5">28.454</div>
<div class="c" style="left:585px;top:442px;width:43px;background:#b8cfe5">-0.461</div>
<div class="c" style="left:629px;top:442px;width:44px;background:#b8cfe5">0.220</div>
<div class="c" style="left:674px;top:442px;width:43px;background:#b8cfe5">18</div>
<div class="c" style="left:3px;top:458px;width:44px;background:#b8cfe5">69764</div>
<div class="c" style="left:48px;top:458px;width:44px;background:#b8cfe5">16:06...</div>
<div class="c" style="left:93px;top:458px;width:44px;background:#b8cfe5">28.730</div>
<div class="c" style="left:138px;top:458px;width:44px;background:#b8cfe5">-0.006</div>
<div class="c" style="left:183px;top:458px;width:44px;background:#b8cfe5">0.274</div>
<div class="c" style="left:228px;top:458px;width:44px;background:#b8cfe5">16</div>
<div class="c" style="left:273px;top:458px;width:44px;background:#b8cfe5">16:06...</div>
<div class="c" style="left:318px;top:458px;width:43px;background:#b8cfe5">28.880</div>
<div class="c" style="left:362px;top:458px;width:44px;background:#b8cfe5">-0.377</div>
<div class="c" style="left:407px;top:458px;width:43px;background:#b8cfe5">0.243</div>
<div class="c" style="left:451px;top:458px;width:44px;background:#b8cfe5">17</div>
<div class="c" style="left:496px;top:458px;width:43px;background:#b8cfe5">16:06...</div>
<div class="c" style="left:540px;top:458px;width:44px;background:#b8cfe5">29.121</div>
<div class="c" style="left:585px;top:458px;width:43px;background:#b8cfe5">-0.385</div>
<div class="c" style="left:629px;top:458px;width:44px;background:#b8cfe5">0.202</div>
<div class="c" style="left:674px;top:458px;width:43px;background:#b8cfe5">18</div>
<div class="a" style="left:718px;top:74px;width:16px;height:400px;background:#eee"></div>
<div class="a" style="left:718px;top:74px;width:15px;height:15px;background:#fafafa"></div>
<div class="a" style="left:718px;top:89px;width:16px;height:1px;background:#7c8791"></div>
<svg class="a" style="left:718px;top:74px" width="16" height="16"><polygon points="4,9 12,9 8,5" fill="#1a1a1a"/></svg>
<div class="a" style="left:718px;top:457px;width:16px;height:1px;background:#7c8791"></div>
<div class="a" style="left:718px;top:458px;width:15px;height:15px;background:#fafafa"></div>
<svg class="a" style="left:718px;top:459px" width="16" height="16"><polygon points="4,6 12,6 8,10" fill="#1a1a1a"/></svg>
<div class="a" style="left:718px;top:365px;width:15px;height:15px;background:linear-gradient(90deg,#ffffff,#c8d8ea);border:1px solid #7f94b4;box-sizing:border-box"></div>
<div class="a" style="left:722px;top:370px;width:8px;height:1px;background:#7088a8"></div>
<div class="a" style="left:722px;top:372px;width:8px;height:1px;background:#7088a8"></div>
<div class="a" style="left:722px;top:374px;width:8px;height:1px;background:#7088a8"></div>
<div class="a" style="left:733px;top:54px;width:1px;height:436px;background:#7c8791"></div>
<div class="a" style="left:3px;top:474px;width:730px;height:15px;background:#eee"></div>
<div class="a" style="left:3px;top:474px;width:15px;height:15px;background:#fafafa"></div>
<div class="a" style="left:18px;top:474px;width:1px;height:15px;background:#7c8791"></div>
<svg class="a" style="left:3px;top:474px" width="16" height="16"><polygon points="9,3 9,12 4.5,7.500" fill="#1a1a1a"/></svg>
<div class="a" style="left:702px;top:474px;width:1px;height:15px;background:#7c8791"></div>
<div class="a" style="left:703px;top:474px;width:14px;height:15px;background:#fafafa"></div>
<svg class="a" style="left:703px;top:474px" width="16" height="16"><polygon points="6,3 6,12 10.5,7.500" fill="#1a1a1a"/></svg>
<div class="a" style="left:718px;top:74px;width:1px;height:400px;background:#8496ae"></div>
<div class="a" style="left:717px;top:474px;width:1px;height:15px;background:#7c8791"></div>
<div class="a" style="left:3px;top:489px;width:731px;height:1px;background:#7c8791"></div>
<div class="a" style="left:0;top:490px;width:1px;height:10px;background:#9aa4b0"></div>
<svg class="a" style="left:1px;top:490px" width="733" height="10" viewBox="1 490 733 10" shape-rendering="crispEdges"><defs><pattern id="bp1" x="100" y="494" width="4" height="4" patternUnits="userSpaceOnUse"><rect x="0" y="0" width="1" height="1" fill="#ffffff"/><rect x="1" y="1" width="1" height="1" fill="#858c96"/><rect x="2" y="2" width="1" height="1" fill="#ffffff"/><rect x="3" y="3" width="1" height="1" fill="#858c96"/></pattern></defs><rect x="1" y="490" width="733" height="10" fill="#f4f5f8"/><rect x="3" y="494" width="729" height="4" fill="url(#bp1)"/></svg>
<div class="a" style="left:0;top:500px;width:734px;height:510px;background:#75839a"></div>
<div class="a" style="left:3px;top:502px;width:715px;height:507px;background:#7c8791;overflow:hidden" id="bt">
<div class="h" style="left:0px;top:0;width:83px">Category</div>
<div class="h" style="left:84px;top:0;width:46px">#</div>
<div class="h" style="left:131px;top:0;width:82px">Speed</div>
<div class="h" style="left:214px;top:0;width:56px">+-</div>
<div class="h" style="left:271px;top:0;width:85px">Time</div>
<div class="h" style="left:357px;top:0;width:53px">Speed</div>
<div class="h" style="left:411px;top:0;width:50px">+-</div>
<div class="h" style="left:462px;top:0;width:39px">Time</div>
<div class="h" style="left:502px;top:0;width:55px">Speed</div>
<div class="h" style="left:558px;top:0;width:47px">+-</div>
<div class="h" style="left:606px;top:0;width:108px">Time</div>
<div class="c b" style="left:0px;top:20px;width:83px;background:#ffffff">2 sec</div>
<div class="c b" style="left:84px;top:20px;width:46px;background:#ffffff">1</div>
<div class="c b" style="left:131px;top:20px;width:82px;background:#ffffff">31.302</div>
<div class="c b" style="left:214px;top:20px;width:56px;background:#ffffff">0.121</div>
<div class="c b" style="left:271px;top:20px;width:85px;background:#ffffff">16:06:56.000</div>
<div class="c b" style="left:357px;top:20px;width:53px;background:#ffffff">31.283</div>
<div class="c b" style="left:411px;top:20px;width:50px;background:#ffffff">0.097</div>
<div class="c b" style="left:462px;top:20px;width:39px;background:#ffffff">16:0...</div>
<div class="c b" style="left:502px;top:20px;width:55px;background:#ffffff">31.319</div>
<div class="c b" style="left:558px;top:20px;width:47px;background:#ffffff">0.093</div>
<div class="c b" style="left:606px;top:20px;width:108px;background:#ffffff">16:06:56.100</div>
<div class="c" style="left:0px;top:36px;width:83px;background:#ffffff">2 sec</div>
<div class="c" style="left:84px;top:36px;width:46px;background:#ffffff">2</div>
<div class="c" style="left:131px;top:36px;width:82px;background:#ffffff">30.606</div>
<div class="c" style="left:214px;top:36px;width:56px;background:#ffffff">0.112</div>
<div class="c" style="left:271px;top:36px;width:85px;background:#ffffff">15:19:54.000</div>
<div class="c" style="left:357px;top:36px;width:53px;background:#ffffff">30.608</div>
<div class="c" style="left:411px;top:36px;width:50px;background:#ffffff">0.106</div>
<div class="c" style="left:462px;top:36px;width:39px;background:#ffffff">15:1...</div>
<div class="c" style="left:502px;top:36px;width:55px;background:#ffffff">30.648</div>
<div class="c" style="left:558px;top:36px;width:47px;background:#ffffff">0.115</div>
<div class="c" style="left:606px;top:36px;width:108px;background:#ffffff">15:19:54.200</div>
<div class="c" style="left:0px;top:52px;width:83px;background:#ffffff">2 sec</div>
<div class="c" style="left:84px;top:52px;width:46px;background:#ffffff">3</div>
<div class="c" style="left:131px;top:52px;width:82px;background:#ffffff">30.397</div>
<div class="c" style="left:214px;top:52px;width:56px;background:#ffffff">0.121</div>
<div class="c" style="left:271px;top:52px;width:85px;background:#ffffff">15:36:03.200</div>
<div class="c" style="left:357px;top:52px;width:53px;background:#ffffff">30.468</div>
<div class="c" style="left:411px;top:52px;width:50px;background:#ffffff">0.108</div>
<div class="c" style="left:462px;top:52px;width:39px;background:#ffffff">15:3...</div>
<div class="c" style="left:502px;top:52px;width:55px;background:#ffffff">30.498</div>
<div class="c" style="left:558px;top:52px;width:47px;background:#ffffff">0.095</div>
<div class="c" style="left:606px;top:52px;width:108px;background:#ffffff">15:36:03.300</div>
<div class="c" style="left:0px;top:68px;width:83px;background:#ffffff">2 sec</div>
<div class="c" style="left:84px;top:68px;width:46px;background:#ffffff">4</div>
<div class="c" style="left:131px;top:68px;width:82px;background:#ffffff">30.085</div>
<div class="c" style="left:214px;top:68px;width:56px;background:#ffffff">0.122</div>
<div class="c" style="left:271px;top:68px;width:85px;background:#ffffff">16:03:51.000</div>
<div class="c" style="left:357px;top:68px;width:53px;background:#ffffff">30.163</div>
<div class="c" style="left:411px;top:68px;width:50px;background:#ffffff">0.102</div>
<div class="c" style="left:462px;top:68px;width:39px;background:#ffffff">16:0...</div>
<div class="c" style="left:502px;top:68px;width:55px;background:#ffffff">30.202</div>
<div class="c" style="left:558px;top:68px;width:47px;background:#ffffff">0.086</div>
<div class="c" style="left:606px;top:68px;width:108px;background:#ffffff">16:03:50.300</div>
<div class="c" style="left:0px;top:84px;width:83px;background:#ffff00">2 sec</div>
<div class="c" style="left:84px;top:84px;width:46px;background:#ffff00">5</div>
<div class="c" style="left:131px;top:84px;width:82px;background:#ffff00">29.986</div>
<div class="c" style="left:214px;top:84px;width:56px;background:#ffff00">0.129</div>
<div class="c" style="left:271px;top:84px;width:85px;background:#ffff00">15:54:15.000</div>
<div class="c" style="left:357px;top:84px;width:53px;background:#ffff00">30.028</div>
<div class="c" style="left:411px;top:84px;width:50px;background:#ffff00">0.114</div>
<div class="c" style="left:462px;top:84px;width:39px;background:#ffff00">15:0...</div>
<div class="c" style="left:502px;top:84px;width:55px;background:#ffff00">30.150</div>
<div class="c" style="left:558px;top:84px;width:47px;background:#ffff00">0.092</div>
<div class="c" style="left:606px;top:84px;width:108px;background:#ffff00">15:54:14.900</div>
<div class="c" style="left:0px;top:100px;width:83px;background:#b8cfe5">10 sec</div>
<div class="c" style="left:84px;top:100px;width:46px;background:#b8cfe5">1</div>
<div class="c" style="left:131px;top:100px;width:82px;background:#b8cfe5">30.132</div>
<div class="c" style="left:214px;top:100px;width:56px;background:#b8cfe5">0.054</div>
<div class="c" style="left:271px;top:100px;width:85px;background:#b8cfe5">16:06:57.600</div>
<div class="c" style="left:357px;top:100px;width:53px;background:#b8cfe5">30.197</div>
<div class="c" style="left:411px;top:100px;width:50px;background:#b8cfe5">0.045</div>
<div class="c" style="left:462px;top:100px;width:39px;background:#b8cfe5">16:0...</div>
<div class="c" style="left:502px;top:100px;width:55px;background:#b8cfe5">30.204</div>
<div class="c" style="left:558px;top:100px;width:47px;background:#b8cfe5">0.040</div>
<div class="c" style="left:606px;top:100px;width:108px;background:#b8cfe5">16:06:57.600</div>
<div class="c" style="left:0px;top:116px;width:83px;background:#ffffff">10 sec</div>
<div class="c" style="left:84px;top:116px;width:46px;background:#ffffff">2</div>
<div class="c" style="left:131px;top:116px;width:82px;background:#ffffff">29.680</div>
<div class="c" style="left:214px;top:116px;width:56px;background:#ffffff">0.054</div>
<div class="c" style="left:271px;top:116px;width:85px;background:#ffffff">15:36:05.400</div>
<div class="c" style="left:357px;top:116px;width:53px;background:#ffffff">29.695</div>
<div class="c" style="left:411px;top:116px;width:50px;background:#ffffff">0.050</div>
<div class="c" style="left:462px;top:116px;width:39px;background:#ffffff">15:3...</div>
<div class="c" style="left:502px;top:116px;width:55px;background:#ffffff">29.739</div>
<div class="c" style="left:558px;top:116px;width:47px;background:#ffffff">0.042</div>
<div class="c" style="left:606px;top:116px;width:108px;background:#ffffff">15:36:05.500</div>
<div class="c" style="left:0px;top:132px;width:83px;background:#ffffff">10 sec</div>
<div class="c" style="left:84px;top:132px;width:46px;background:#ffffff">3</div>
<div class="c" style="left:131px;top:132px;width:82px;background:#ffffff">29.548</div>
<div class="c" style="left:214px;top:132px;width:56px;background:#ffffff">0.056</div>
<div class="c" style="left:271px;top:132px;width:85px;background:#ffffff">15:54:16.400</div>
<div class="c" style="left:357px;top:132px;width:53px;background:#ffffff">29.589</div>
<div class="c" style="left:411px;top:132px;width:50px;background:#ffffff">0.053</div>
<div class="c" style="left:462px;top:132px;width:39px;background:#ffffff">15:5...</div>
<div class="c" style="left:502px;top:132px;width:55px;background:#ffffff">29.611</div>
<div class="c" style="left:558px;top:132px;width:47px;background:#ffffff">0.042</div>
<div class="c" style="left:606px;top:132px;width:108px;background:#ffffff">15:54:16.500</div>
<div class="c" style="left:0px;top:148px;width:83px;background:#ffffff">10 sec</div>
<div class="c" style="left:84px;top:148px;width:46px;background:#ffffff">4</div>
<div class="c" style="left:131px;top:148px;width:82px;background:#ffffff">29.270</div>
<div class="c" style="left:214px;top:148px;width:56px;background:#ffffff">0.051</div>
<div class="c" style="left:271px;top:148px;width:85px;background:#ffffff">15:19:56.100</div>
<div class="c" style="left:357px;top:148px;width:53px;background:#ffffff">29.297</div>
<div class="c" style="left:411px;top:148px;width:50px;background:#ffffff">0.048</div>
<div class="c" style="left:462px;top:148px;width:39px;background:#ffffff">15:1...</div>
<div class="c" style="left:502px;top:148px;width:55px;background:#ffffff">29.278</div>
<div class="c" style="left:558px;top:148px;width:47px;background:#ffffff">0.045</div>
<div class="c" style="left:606px;top:148px;width:108px;background:#ffffff">15:19:56.200</div>
<div class="c" style="left:0px;top:164px;width:83px;background:#ffff00">10 sec</div>
<div class="c" style="left:84px;top:164px;width:46px;background:#ffff00">5</div>
<div class="c" style="left:131px;top:164px;width:82px;background:#ffff00">29.243</div>
<div class="c" style="left:214px;top:164px;width:56px;background:#ffff00">0.049</div>
<div class="c" style="left:271px;top:164px;width:85px;background:#ffff00">14:53:24.100</div>
<div class="c" style="left:357px;top:164px;width:53px;background:#ffff00">29.275</div>
<div class="c" style="left:411px;top:164px;width:50px;background:#ffff00">0.049</div>
<div class="c" style="left:462px;top:164px;width:39px;background:#ffff00">15:3...</div>
<div class="c" style="left:502px;top:164px;width:55px;background:#ffff00">29.278</div>
<div class="c" style="left:558px;top:164px;width:47px;background:#ffff00">0.045</div>
<div class="c" style="left:606px;top:164px;width:108px;background:#ffff00">15:37:13.800</div>
<div class="c b" style="left:0px;top:180px;width:83px;background:#ffffff">5x10 sec</div>
<div class="c b" style="left:84px;top:180px;width:46px;background:#ffffff">1</div>
<div class="c b" style="left:131px;top:180px;width:82px;background:#ffffff">29.575</div>
<div class="c b" style="left:214px;top:180px;width:56px;background:#ffffff">0.052</div>
<div class="c b" style="left:271px;top:180px;width:85px;background:#ffffff"></div>
<div class="c b" style="left:357px;top:180px;width:53px;background:#ffffff">29.610</div>
<div class="c b" style="left:411px;top:180px;width:50px;background:#ffffff">0.049</div>
<div class="c b" style="left:462px;top:180px;width:39px;background:#ffffff"></div>
<div class="c b" style="left:502px;top:180px;width:55px;background:#ffffff">29.622</div>
<div class="c b" style="left:558px;top:180px;width:47px;background:#ffffff">0.043</div>
<div class="c b" style="left:606px;top:180px;width:108px;background:#ffffff"></div>
<div class="c b" style="left:0px;top:196px;width:83px;background:#ffc000">1 hour</div>
<div class="c b" style="left:84px;top:196px;width:46px;background:#ffc000">1</div>
<div class="c b" style="left:131px;top:196px;width:82px;background:#ffc000">11.399</div>
<div class="c b" style="left:214px;top:196px;width:56px;background:#ffc000">0.023</div>
<div class="c b" style="left:271px;top:196px;width:85px;background:#ffc000">16:32:56.300</div>
<div class="c b" style="left:357px;top:196px;width:53px;background:#ffc000">11.437</div>
<div class="c b" style="left:411px;top:196px;width:50px;background:#ffc000">0.003</div>
<div class="c b" style="left:462px;top:196px;width:39px;background:#ffc000">16:3...</div>
<div class="c b" style="left:502px;top:196px;width:55px;background:#ffc000">11.438</div>
<div class="c b" style="left:558px;top:196px;width:47px;background:#ffc000">0.002</div>
<div class="c b" style="left:606px;top:196px;width:108px;background:#ffc000">16:33:07.400</div>
<div class="c" style="left:0px;top:212px;width:83px;background:#ffffff">1 hour</div>
<div class="c" style="left:84px;top:212px;width:46px;background:#ffffff">2</div>
<div class="c" style="left:131px;top:212px;width:82px;background:#ffffff">11.181</div>
<div class="c" style="left:214px;top:212px;width:56px;background:#ffffff">0.169</div>
<div class="c" style="left:271px;top:212px;width:85px;background:#ffffff">15:21:36.400</div>
<div class="c" style="left:357px;top:212px;width:53px;background:#ffffff">11.224</div>
<div class="c" style="left:411px;top:212px;width:50px;background:#ffffff">0.003</div>
<div class="c" style="left:462px;top:212px;width:39px;background:#ffffff">15:2...</div>
<div class="c" style="left:502px;top:212px;width:55px;background:#ffffff">11.222</div>
<div class="c" style="left:558px;top:212px;width:47px;background:#ffffff">0.002</div>
<div class="c" style="left:606px;top:212px;width:108px;background:#ffffff">15:21:36.100</div>
<div class="c b" style="left:0px;top:228px;width:83px;background:#ff0000;color:#5c1412">1852 m</div>
<div class="c b" style="left:84px;top:228px;width:46px;background:#ff0000;color:#5c1412">1</div>
<div class="c b" style="left:131px;top:228px;width:82px;background:#ff0000;color:#5c1412">22.281</div>
<div class="c b" style="left:214px;top:228px;width:56px;background:#ff0000;color:#5c1412">0.012</div>
<div class="c b" style="left:271px;top:228px;width:85px;background:#ff0000;color:#5c1412">14:31:03.600</div>
<div class="c b" style="left:357px;top:228px;width:53px;background:#ff0000;color:#5c1412">22.308</div>
<div class="c b" style="left:411px;top:228px;width:50px;background:#ff0000;color:#5c1412">0.013</div>
<div class="c b" style="left:462px;top:228px;width:39px;background:#ff0000;color:#5c1412">14:3...</div>
<div class="c b" style="left:502px;top:228px;width:55px;background:#ff0000;color:#5c1412">22.251</div>
<div class="c b" style="left:558px;top:228px;width:47px;background:#ff0000;color:#5c1412">0.011</div>
<div class="c b" style="left:606px;top:228px;width:108px;background:#ff0000;color:#5c1412">14:31:03.700</div>
<div class="c" style="left:0px;top:244px;width:83px;background:#ffffff">1852 m</div>
<div class="c" style="left:84px;top:244px;width:46px;background:#ffffff">2</div>
<div class="c" style="left:131px;top:244px;width:82px;background:#ffffff">22.138</div>
<div class="c" style="left:214px;top:244px;width:56px;background:#ffffff">0.014</div>
<div class="c" style="left:271px;top:244px;width:85px;background:#ffffff">16:16:43.700</div>
<div class="c" style="left:357px;top:244px;width:53px;background:#ffffff">22.151</div>
<div class="c" style="left:411px;top:244px;width:50px;background:#ffffff">0.012</div>
<div class="c" style="left:462px;top:244px;width:39px;background:#ffffff">16:1...</div>
<div class="c" style="left:502px;top:244px;width:55px;background:#ffffff">22.154</div>
<div class="c" style="left:558px;top:244px;width:47px;background:#ffffff">0.011</div>
<div class="c" style="left:606px;top:244px;width:108px;background:#ffffff">16:16:43.400</div>
<div class="c" style="left:0px;top:260px;width:83px;background:#ffffff">1852 m</div>
<div class="c" style="left:84px;top:260px;width:46px;background:#ffffff">3</div>
<div class="c" style="left:131px;top:260px;width:82px;background:#ffffff">21.970</div>
<div class="c" style="left:214px;top:260px;width:56px;background:#ffffff">0.014</div>
<div class="c" style="left:271px;top:260px;width:85px;background:#ffffff">16:00:34.500</div>
<div class="c" style="left:357px;top:260px;width:53px;background:#ffffff">21.977</div>
<div class="c" style="left:411px;top:260px;width:50px;background:#ffffff">0.012</div>
<div class="c" style="left:462px;top:260px;width:39px;background:#ffffff">16:0...</div>
<div class="c" style="left:502px;top:260px;width:55px;background:#ffffff">21.955</div>
<div class="c" style="left:558px;top:260px;width:47px;background:#ffffff">0.010</div>
<div class="c" style="left:606px;top:260px;width:108px;background:#ffffff">16:00:34.700</div>
<div class="c" style="left:0px;top:276px;width:83px;background:#ffffff">1852 m</div>
<div class="c" style="left:84px;top:276px;width:46px;background:#ffffff">4</div>
<div class="c" style="left:131px;top:276px;width:82px;background:#ffffff">21.459</div>
<div class="c" style="left:214px;top:276px;width:56px;background:#ffffff">0.013</div>
<div class="c" style="left:271px;top:276px;width:85px;background:#ffffff">14:51:53.500</div>
<div class="c" style="left:357px;top:276px;width:53px;background:#ffffff">21.449</div>
<div class="c" style="left:411px;top:276px;width:50px;background:#ffffff">0.013</div>
<div class="c" style="left:462px;top:276px;width:39px;background:#ffffff">14:5...</div>
<div class="c" style="left:502px;top:276px;width:55px;background:#ffffff">21.453</div>
<div class="c" style="left:558px;top:276px;width:47px;background:#ffffff">0.011</div>
<div class="c" style="left:606px;top:276px;width:108px;background:#ffffff">14:51:52.900</div>
<div class="c" style="left:0px;top:292px;width:83px;background:#ffffff">1852 m</div>
<div class="c" style="left:84px;top:292px;width:46px;background:#ffffff">5</div>
<div class="c" style="left:131px;top:292px;width:82px;background:#ffffff">21.149</div>
<div class="c" style="left:214px;top:292px;width:56px;background:#ffffff">0.013</div>
<div class="c" style="left:271px;top:292px;width:85px;background:#ffffff">16:30:17.300</div>
<div class="c" style="left:357px;top:292px;width:53px;background:#ffffff">21.159</div>
<div class="c" style="left:411px;top:292px;width:50px;background:#ffffff">0.011</div>
<div class="c" style="left:462px;top:292px;width:39px;background:#ffffff">16:3...</div>
<div class="c" style="left:502px;top:292px;width:55px;background:#ffffff">21.165</div>
<div class="c" style="left:558px;top:292px;width:47px;background:#ffffff">0.009</div>
<div class="c" style="left:606px;top:292px;width:108px;background:#ffffff">16:30:17.100</div>
<div class="c b" style="left:0px;top:308px;width:83px;background:#ff0000;color:#5c1412">Distance</div>
<div class="c b" style="left:84px;top:308px;width:46px;background:#ff0000;color:#5c1412">1</div>
<div class="c b" style="left:131px;top:308px;width:82px;background:#ff0000;color:#5c1412">42.252 km</div>
<div class="c b" style="left:214px;top:308px;width:56px;background:#ff0000;color:#5c1412"></div>
<div class="c b" style="left:271px;top:308px;width:85px;background:#ff0000;color:#5c1412">16:40:13.700</div>
<div class="c b" style="left:357px;top:308px;width:53px;background:#ff0000;color:#5c1412">42.749 ...</div>
<div class="c b" style="left:411px;top:308px;width:50px;background:#ff0000;color:#5c1412"></div>
<div class="c b" style="left:462px;top:308px;width:39px;background:#ff0000;color:#5c1412">16:4...</div>
<div class="c b" style="left:502px;top:308px;width:55px;background:#ff0000;color:#5c1412">42.752 ...</div>
<div class="c b" style="left:558px;top:308px;width:47px;background:#ff0000;color:#5c1412"></div>
<div class="c b" style="left:606px;top:308px;width:108px;background:#ff0000;color:#5c1412">16:40:13.700</div>
<div class="c b" style="left:0px;top:324px;width:83px;background:#ffffff">alpha500</div>
<div class="c b" style="left:84px;top:324px;width:46px;background:#ffffff">1</div>
<div class="c b" style="left:131px;top:324px;width:82px;background:#ffffff">22.487</div>
<div class="c b" style="left:214px;top:324px;width:56px;background:#ffffff">0.027</div>
<div class="c b" style="left:271px;top:324px;width:85px;background:#ffffff">16:25:55.700</div>
<div class="c b" style="left:357px;top:324px;width:53px;background:#ffffff">22.506</div>
<div class="c b" style="left:411px;top:324px;width:50px;background:#ffffff">0.023</div>
<div class="c b" style="left:462px;top:324px;width:39px;background:#ffffff">16:2...</div>
<div class="c b" style="left:502px;top:324px;width:55px;background:#ffffff">22.497</div>
<div class="c b" style="left:558px;top:324px;width:47px;background:#ffffff">0.018</div>
<div class="c b" style="left:606px;top:324px;width:108px;background:#ffffff">16:25:55.700</div>
<div class="c" style="left:0px;top:340px;width:83px;background:#ffffff">alpha500</div>
<div class="c" style="left:84px;top:340px;width:46px;background:#ffffff">2</div>
<div class="c" style="left:131px;top:340px;width:82px;background:#ffffff">22.456</div>
<div class="c" style="left:214px;top:340px;width:56px;background:#ffffff">0.027</div>
<div class="c" style="left:271px;top:340px;width:85px;background:#ffffff">16:28:40.300</div>
<div class="c" style="left:357px;top:340px;width:53px;background:#ffffff">22.454</div>
<div class="c" style="left:411px;top:340px;width:50px;background:#ffffff">0.023</div>
<div class="c" style="left:462px;top:340px;width:39px;background:#ffffff">16:2...</div>
<div class="c" style="left:502px;top:340px;width:55px;background:#ffffff">22.466</div>
<div class="c" style="left:558px;top:340px;width:47px;background:#ffffff">0.019</div>
<div class="c" style="left:606px;top:340px;width:108px;background:#ffffff">16:28:40.300</div>
<div class="c" style="left:0px;top:356px;width:83px;background:#ff0000;color:#8a1a14">alpha500</div>
<div class="c" style="left:84px;top:356px;width:46px;background:#ff0000;color:#8a1a14">3</div>
<div class="c" style="left:131px;top:356px;width:82px;background:#ff0000;color:#8a1a14">21.673</div>
<div class="c" style="left:214px;top:356px;width:56px;background:#ff0000;color:#8a1a14">0.023</div>
<div class="c" style="left:271px;top:356px;width:85px;background:#ff0000;color:#8a1a14">14:29:23.900</div>
<div class="c" style="left:357px;top:356px;width:53px;background:#ff0000;color:#8a1a14">21.663</div>
<div class="c" style="left:411px;top:356px;width:50px;background:#ff0000;color:#8a1a14">0.024</div>
<div class="c" style="left:462px;top:356px;width:39px;background:#ff0000;color:#8a1a14">14:2...</div>
<div class="c" style="left:502px;top:356px;width:55px;background:#ff0000;color:#8a1a14">21.560</div>
<div class="c" style="left:558px;top:356px;width:47px;background:#ff0000;color:#8a1a14">0.020</div>
<div class="c" style="left:606px;top:356px;width:108px;background:#ff0000;color:#8a1a14">14:29:24.000</div>
<div class="c" style="left:0px;top:372px;width:83px;background:#ffffff">alpha500</div>
<div class="c" style="left:84px;top:372px;width:46px;background:#ffffff">4</div>
<div class="c" style="left:131px;top:372px;width:82px;background:#ffffff">21.345</div>
<div class="c" style="left:214px;top:372px;width:56px;background:#ffffff">0.025</div>
<div class="c" style="left:271px;top:372px;width:85px;background:#ffffff">14:50:03.000</div>
<div class="c" style="left:357px;top:372px;width:53px;background:#ffffff">21.332</div>
<div class="c" style="left:411px;top:372px;width:50px;background:#ffffff">0.025</div>
<div class="c" style="left:462px;top:372px;width:39px;background:#ffffff">14:5...</div>
<div class="c" style="left:502px;top:372px;width:55px;background:#ffffff">21.349</div>
<div class="c" style="left:558px;top:372px;width:47px;background:#ffffff">0.021</div>
<div class="c" style="left:606px;top:372px;width:108px;background:#ffffff">14:50:03.000</div>
<div class="c" style="left:0px;top:388px;width:83px;background:#ffc000">alpha500</div>
<div class="c" style="left:84px;top:388px;width:46px;background:#ffc000">5</div>
<div class="c" style="left:131px;top:388px;width:82px;background:#ffc000">21.175</div>
<div class="c" style="left:214px;top:388px;width:56px;background:#ffc000">0.026</div>
<div class="c" style="left:271px;top:388px;width:85px;background:#ffc000">16:00:03.200</div>
<div class="c" style="left:357px;top:388px;width:53px;background:#ffc000">21.174</div>
<div class="c" style="left:411px;top:388px;width:50px;background:#ffc000">0.023</div>
<div class="c" style="left:462px;top:388px;width:39px;background:#ffc000">16:0...</div>
<div class="c" style="left:502px;top:388px;width:55px;background:#ffc000">21.108</div>
<div class="c" style="left:558px;top:388px;width:47px;background:#ffc000">0.020</div>
<div class="c" style="left:606px;top:388px;width:108px;background:#ffc000">16:00:03.800</div>
<div class="c" style="left:0px;top:404px;width:83px;background:#ffffff">alpha (60 m)</div>
<div class="c" style="left:84px;top:404px;width:46px;background:#ffffff">1</div>
<div class="c" style="left:131px;top:404px;width:82px;background:#ffffff">22.512</div>
<div class="c" style="left:214px;top:404px;width:56px;background:#ffffff">0.027</div>
<div class="c" style="left:271px;top:404px;width:85px;background:#ffffff">16:25:56.100</div>
<div class="c" style="left:357px;top:404px;width:53px;background:#ffffff">22.528</div>
<div class="c" style="left:411px;top:404px;width:50px;background:#ffffff">0.023</div>
<div class="c" style="left:462px;top:404px;width:39px;background:#ffffff">16:2...</div>
<div class="c" style="left:502px;top:404px;width:55px;background:#ffffff">22.515</div>
<div class="c" style="left:558px;top:404px;width:47px;background:#ffffff">0.019</div>
<div class="c" style="left:606px;top:404px;width:108px;background:#ffffff">16:25:56.100</div>
<div class="c" style="left:0px;top:420px;width:83px;background:#ffffff">alpha (60 m)</div>
<div class="c" style="left:84px;top:420px;width:46px;background:#ffffff">2</div>
<div class="c" style="left:131px;top:420px;width:82px;background:#ffffff">22.495</div>
<div class="c" style="left:214px;top:420px;width:56px;background:#ffffff">0.027</div>
<div class="c" style="left:271px;top:420px;width:85px;background:#ffffff">16:28:40.700</div>
<div class="c" style="left:357px;top:420px;width:53px;background:#ffffff">22.493</div>
<div class="c" style="left:411px;top:420px;width:50px;background:#ffffff">0.023</div>
<div class="c" style="left:462px;top:420px;width:39px;background:#ffffff">16:2...</div>
<div class="c" style="left:502px;top:420px;width:55px;background:#ffffff">22.502</div>
<div class="c" style="left:558px;top:420px;width:47px;background:#ffffff">0.019</div>
<div class="c" style="left:606px;top:420px;width:108px;background:#ffffff">16:28:40.700</div>
<div class="c" style="left:0px;top:436px;width:83px;background:#ffc000">alpha (60 m)</div>
<div class="c" style="left:84px;top:436px;width:46px;background:#ffc000">3</div>
<div class="c" style="left:131px;top:436px;width:82px;background:#ffc000">21.700</div>
<div class="c" style="left:214px;top:436px;width:56px;background:#ffc000">0.023</div>
<div class="c" style="left:271px;top:436px;width:85px;background:#ffc000">14:29:23.500</div>
<div class="c" style="left:357px;top:436px;width:53px;background:#ffc000">21.718</div>
<div class="c" style="left:411px;top:436px;width:50px;background:#ffc000">0.024</div>
<div class="c" style="left:462px;top:436px;width:39px;background:#ffc000">14:2...</div>
<div class="c" style="left:502px;top:436px;width:55px;background:#ffc000">21.368</div>
<div class="c" style="left:558px;top:436px;width:47px;background:#ffc000">0.021</div>
<div class="c" style="left:606px;top:436px;width:108px;background:#ffc000">14:50:03.300</div>
<div class="c" style="left:0px;top:452px;width:83px;background:#ffc000">alpha (60 m)</div>
<div class="c" style="left:84px;top:452px;width:46px;background:#ffc000">4</div>
<div class="c" style="left:131px;top:452px;width:82px;background:#ffc000">21.366</div>
<div class="c" style="left:214px;top:452px;width:56px;background:#ffc000">0.025</div>
<div class="c" style="left:271px;top:452px;width:85px;background:#ffc000">14:50:03.300</div>
<div class="c" style="left:357px;top:452px;width:53px;background:#ffc000">21.360</div>
<div class="c" style="left:411px;top:452px;width:50px;background:#ffc000">0.025</div>
<div class="c" style="left:462px;top:452px;width:39px;background:#ffc000">14:5...</div>
<div class="c" style="left:502px;top:452px;width:55px;background:#ffc000">20.632</div>
<div class="c" style="left:558px;top:452px;width:47px;background:#ffc000">0.020</div>
<div class="c" style="left:606px;top:452px;width:108px;background:#ffc000">16:15:13.200</div>
<div class="c" style="left:0px;top:468px;width:83px;background:#ffc000">alpha (60 m)</div>
<div class="c" style="left:84px;top:468px;width:46px;background:#ffc000">5</div>
<div class="c" style="left:131px;top:468px;width:82px;background:#ffc000">20.595</div>
<div class="c" style="left:214px;top:468px;width:56px;background:#ffc000">0.027</div>
<div class="c" style="left:271px;top:468px;width:85px;background:#ffc000">16:15:13.200</div>
<div class="c" style="left:357px;top:468px;width:53px;background:#ffc000">21.174</div>
<div class="c" style="left:411px;top:468px;width:50px;background:#ffc000">0.023</div>
<div class="c" style="left:462px;top:468px;width:39px;background:#ffc000">16:0...</div>
<div class="c" style="left:502px;top:468px;width:55px;background:#ffc000">20.105</div>
<div class="c" style="left:558px;top:468px;width:47px;background:#ffc000">0.020</div>
<div class="c" style="left:606px;top:468px;width:108px;background:#ffc000">14:42:55.800</div>
<div class="c" style="left:0px;top:484px;width:83px;background:#ffffff">alpha (70 m)</div>
<div class="c" style="left:84px;top:484px;width:46px;background:#ffffff">1</div>
<div class="c" style="left:131px;top:484px;width:82px;background:#ffffff">22.534</div>
<div class="c" style="left:214px;top:484px;width:56px;background:#ffffff">0.027</div>
<div class="c" style="left:271px;top:484px;width:85px;background:#ffffff">16:25:56.500</div>
<div class="c" style="left:357px;top:484px;width:53px;background:#ffffff">22.548</div>
<div class="c" style="left:411px;top:484px;width:50px;background:#ffffff">0.023</div>
<div class="c" style="left:462px;top:484px;width:39px;background:#ffffff">16:2...</div>
<div class="c" style="left:502px;top:484px;width:55px;background:#ffffff">22.538</div>
<div class="c" style="left:558px;top:484px;width:47px;background:#ffffff">0.019</div>
<div class="c" style="left:606px;top:484px;width:108px;background:#ffffff">16:25:56.500</div>
<div class="c" style="left:0px;top:500px;width:83px;background:#ffffff">alpha (70 m)</div>
<div class="c" style="left:84px;top:500px;width:46px;background:#ffffff">2</div>
<div class="c" style="left:131px;top:500px;width:82px;background:#ffffff">22.520</div>
<div class="c" style="left:214px;top:500px;width:56px;background:#ffffff">0.028</div>
<div class="c" style="left:271px;top:500px;width:85px;background:#ffffff">16:28:41.100</div>
<div class="c" style="left:357px;top:500px;width:53px;background:#ffffff">22.520</div>
<div class="c" style="left:411px;top:500px;width:50px;background:#ffffff">0.023</div>
<div class="c" style="left:462px;top:500px;width:39px;background:#ffffff">16:2...</div>
<div class="c" style="left:502px;top:500px;width:55px;background:#ffffff">22.526</div>
<div class="c" style="left:558px;top:500px;width:47px;background:#ffffff">0.019</div>
<div class="c" style="left:606px;top:500px;width:108px;background:#ffffff">16:28:41.100</div>
</div>
<div class="a" style="left:718px;top:502px;width:15px;height:19px;background:#eee"></div>
<div class="a" style="left:718px;top:522px;width:15px;height:487px;background:#eee"></div>
<div class="a" style="left:718px;top:522px;width:15px;height:15px;background:#fafafa"></div>
<svg class="a" style="left:718px;top:522px" width="16" height="16"><polygon points="4,9 12,9 8,5" fill="#1a1a1a"/></svg>
<div class="a" style="left:718px;top:537px;width:15px;height:316px;background:linear-gradient(90deg,#6d88ba 0,#6d88ba 1px,#dfe9f5 2px,#ffffff 5px,#c4d6ea 11px,#b4c8e0 14px,#7f94b4 15px);border-top:1px solid #7f94b4;border-bottom:1px solid #7f94b4;box-sizing:border-box"></div>
<div class="a" style="left:722px;top:692px;width:8px;height:1px;background:#7088a8"></div>
<div class="a" style="left:722px;top:694px;width:8px;height:1px;background:#7088a8"></div>
<div class="a" style="left:722px;top:696px;width:8px;height:1px;background:#7088a8"></div>
<div class="a" style="left:718px;top:992px;width:15px;height:1px;background:#7c8791"></div>
<div class="a" style="left:718px;top:993px;width:15px;height:16px;background:#fafafa"></div>
<svg class="a" style="left:718px;top:993px" width="16" height="16"><polygon points="4,6 12,6 8,10" fill="#1a1a1a"/></svg>
<div class="a" style="left:733px;top:501px;width:1px;height:509px;background:#7c8791"></div>
<div class="a" style="left:0px;top:1009px;width:734px;height:1px;background:#7c8791"></div>
<svg class="a" style="left:734px;top:51px" width="11" height="960" viewBox="734 51 11 960" shape-rendering="crispEdges"><defs><pattern id="bp2" x="739" y="150" width="4" height="4" patternUnits="userSpaceOnUse"><rect x="0" y="0" width="1" height="1" fill="#ffffff"/><rect x="1" y="1" width="1" height="1" fill="#858c96"/><rect x="2" y="2" width="1" height="1" fill="#ffffff"/><rect x="3" y="3" width="1" height="1" fill="#858c96"/></pattern></defs><rect x="734" y="51" width="11" height="960" fill="#f8f9fc"/><rect x="739" y="53" width="4" height="956" fill="url(#bp2)"/></svg>
<div class="a" style="left:745px;top:161px;width:1px;height:850px;background:#9aa6b4"></div>
<div class="a" style="left:746px;top:52px;width:1131px;height:109px;background:#000"></div>
<div class="a" style="left:747px;top:53px;width:1130px;height:107px;background:#fff"></div>
<svg class="a" style="left:747px;top:53px" width="1130" height="107" viewBox="747 53 1130 107">
<rect x="747" y="92" width="1130" height="2" fill="#3a3a3a"/>
<g fill="none" stroke-linecap="round" stroke-linejoin="round">
<polyline points="770,110 780,83" stroke="#18c818" stroke-width="2.8"/>
<polyline points="790.2,76.5 808.5,68.2" stroke="#18c818" stroke-width="3"/>
<polyline points="746,51.500 805.500,87.500" stroke="#0a0ad8" stroke-width="3.4"/>
<polyline points="763,75 802.5,86" stroke="#0a0ad8" stroke-width="2.4"/>
<circle cx="763.5" cy="75.2" r="1.3" fill="#0a0ac0" stroke="none"/>
<polyline points="769,111 783.3,100" stroke="#0a0ab0" stroke-width="1.8"/>
<rect x="767.8" y="109.6" width="2.8" height="2.8" fill="#0a0ac0" stroke="none"/>
<polyline points="783.3,67 784.2,110 785.3,160" stroke="#0a0ad8" stroke-width="3.6"/>
<polyline points="783,78 788.6,87 790.8,100 789.7,107.5 796,120" stroke="#0a0ad8" stroke-width="5.5"/>
<polyline points="790,83 797.500,88 796,97 792,104" stroke="#0a0ad8" stroke-width="4"/>
<polyline points="792,110.500 803.600,111.700" stroke="#0a0ad8" stroke-width="4"/>
<polyline points="803.6,116 811.500,113.500" stroke="#0a0ad0" stroke-width="3.2"/>
<polyline points="796,95.7 803.6,100" stroke="#107838" stroke-width="2.6"/>
<polyline points="795.6,101.6 815.3,105.3" stroke="#e01010" stroke-width="1.7"/>
<polyline points="806.2,98.4 816.4,104.2" stroke="#0a0ad8" stroke-width="1.7"/>
<polyline points="806.2,98.4 801.4,118 799.3,128.800" stroke="#0a0ad0" stroke-width="2"/>
<polyline points="804.1,62.7 806.2,69 806.2,76.500 808.400,80.300 805.200,84 805.200,87.700" stroke="#0a0aa8" stroke-width="2.2"/>
<circle cx="804.1" cy="62.3" r="1.9" fill="#0a0aa0" stroke="none"/>
<circle cx="808.3" cy="80.2" r="1.7" fill="#0a0aa0" stroke="none"/>
<polyline points="799.3,128.8 798.300,134" stroke="#109040" stroke-width="2"/>
<polyline points="798.3,134 797.2,140" stroke="#28c020" stroke-width="2"/>
<polyline points="797.2,140.5 799.8,145.8 795.6,157.5 789.7,159" stroke="#b81010" stroke-width="2.4"/>
</g>
<rect x="784" y="53" width="2" height="107" fill="#46465a" fill-opacity="0.85"/>
</svg>
<svg class="a" style="left:746px;top:161px" width="1131" height="10" viewBox="746 161 1131 10" shape-rendering="crispEdges"><defs><pattern id="bp3" x="748" y="164" width="4" height="4" patternUnits="userSpaceOnUse"><rect x="0" y="0" width="1" height="1" fill="#ffffff"/><rect x="1" y="1" width="1" height="1" fill="#858c96"/><rect x="2" y="2" width="1" height="1" fill="#ffffff"/><rect x="3" y="3" width="1" height="1" fill="#858c96"/></pattern></defs><rect x="746" y="161" width="1131" height="10" fill="#f2f2f4"/><rect x="748" y="164" width="1127" height="4" fill="url(#bp3)"/></svg>
<div class="a" style="left:746px;top:171px;width:1131px;height:570px;background:#000"></div>
<div class="a" style="left:746px;top:172px;width:1131px;height:568px;background:#fff"></div>
<div class="a" style="left:836px;top:172px;width:994px;height:568px;background:#ffffcc"></div>
<div class="a" style="left:835px;top:172px;width:1px;height:568px;background:#7c7c66"></div>
<div class="a" style="left:1830px;top:172px;width:1px;height:568px;background:#7c7c66"></div>
<svg class="a" style="left:746px;top:172px" width="1131" height="568" viewBox="746 172 1131 568"><line x1="746" x2="1877" y1="234.5" y2="234.5" stroke="#c0c0c0" stroke-width="1"/><line x1="746" x2="1877" y1="403.5" y2="403.5" stroke="#c0c0c0" stroke-width="1"/><line x1="746" x2="1877" y1="572.5" y2="572.5" stroke="#c0c0c0" stroke-width="1"/><line x1="746" x2="1877" y1="319.5" y2="319.5" stroke="#c0c0c0" stroke-width="1" stroke-dasharray="20 8"/><line x1="746" x2="1877" y1="487.5" y2="487.5" stroke="#c0c0c0" stroke-width="1" stroke-dasharray="20 8"/><line x1="746" x2="1877" y1="656.5" y2="656.5" stroke="#c0c0c0" stroke-width="1" stroke-dasharray="20 8"/><g shape-rendering="crispEdges"><polyline points="744.9,286.9 754.9,285.4 765.0,291.5 775.0,289.7 785.1,278.7 795.1,276.6 805.1,277.1 815.2,271.2 825.2,262.2 835.3,253.6 845.4,254.7 855.4,260.0 865.5,257.9 875.5,253.8 885.6,256.8 895.6,258.8 905.7,257.4 915.7,263.8 925.8,269.1 935.8,261.6 945.9,254.2 955.9,262.2 966.0,256.3 976.0,244.6 986.1,243.5 996.1,249.4 1006.2,250.4 1016.2,233.9 1026.2,227.0 1036.3,228.9 1046.3,243.3 1056.4,243.5 1066.5,238.7 1076.5,243.8 1086.6,241.4 1096.6,240.3 1106.7,238.9 1116.7,234.4 1126.8,235.5 1136.8,240.2 1146.8,234.4 1156.9,229.3 1167.0,230.1 1177.0,224.8 1187.1,220.3 1197.1,226.4 1207.2,225.3 1217.2,223.2 1227.2,226.4 1237.3,219.2 1247.4,228.5 1257.4,232.8 1267.5,223.7 1277.5,217.3 1287.6,224.2 1297.6,219.4 1307.7,222.6 1317.7,228.0 1327.8,225.4 1337.8,226.5 1347.8,226.5 1357.9,222.2 1368.0,213.2 1378.0,222.2 1388.1,229.5 1398.1,216.7 1408.2,220.3 1418.2,218.0 1428.2,214.2 1438.3,229.5 1448.3,226.5 1458.4,217.2 1468.5,223.1 1478.5,218.5 1488.6,213.5 1498.6,213.2 1508.7,210.6 1518.7,211.4 1528.8,206.4 1538.8,213.0 1548.8,215.3 1558.9,206.0 1569.0,217.8 1579.0,218.3 1589.1,202.4 1599.1,217.2 1609.2,212.6 1619.2,206.5 1629.2,219.3 1639.3,212.7 1649.4,210.4 1659.4,221.1 1669.5,215.1 1679.5,214.8 1689.6,217.6 1699.6,225.2 1709.7,213.6 1719.7,230.0 1729.8,230.8 1739.8,223.8 1749.9,239.5 1759.9,237.5 1770.0,241.3 1780.0,236.8 1790.1,242.9 1800.1,241.0 1810.2,249.6 1820.2,270.4 1830.2,253.4 1840.3,260.1 1850.3,277.0 1860.4,276.0 1870.5,275.1 1880.5,292.0" fill="none" stroke="#f01010" stroke-width="1" stroke-linejoin="round"/><polyline points="744.9,288.8 754.9,291.0 765.0,292.0 775.0,289.9 785.1,279.8 795.1,274.7 805.1,277.3 815.2,272.3 825.2,264.8 835.3,253.6 845.4,254.2 855.4,259.5 865.5,255.2 875.5,253.4 885.6,256.6 895.6,259.0 905.7,257.9 915.7,264.3 925.8,269.1 935.8,261.1 945.9,254.2 955.9,262.4 966.0,254.2 976.0,245.1 986.1,244.0 996.1,249.9 1006.2,244.6 1016.2,235.0 1026.2,230.7 1036.3,228.6 1046.3,243.0 1056.4,244.0 1066.5,238.5 1076.5,244.9 1086.6,243.0 1096.6,242.4 1106.7,237.6 1116.7,231.2 1126.8,238.7 1136.8,242.9 1146.8,232.8 1156.9,234.4 1167.0,231.2 1177.0,224.2 1187.1,222.1 1197.1,232.8 1207.2,218.4 1217.2,226.9 1227.2,229.3 1237.3,212.5 1247.4,228.5 1257.4,233.3 1267.5,224.2 1277.5,217.5 1287.6,223.7 1297.6,216.2 1307.7,220.5 1317.7,229.0 1327.8,226.0 1337.8,228.1 1347.8,229.2 1357.9,216.9 1368.0,214.2 1378.0,221.7 1388.1,228.4 1398.1,216.4 1408.2,219.6 1418.2,218.5 1428.2,216.1 1438.3,226.5 1448.3,230.6 1458.4,223.3 1468.5,224.9 1478.5,218.8 1488.6,214.2 1498.6,212.6 1508.7,207.6 1518.7,211.4 1528.8,206.0 1538.8,211.9 1548.8,212.4 1558.9,205.5 1569.0,217.8 1579.0,215.1 1589.1,209.5 1599.1,209.4 1609.2,213.4 1619.2,203.3 1629.2,219.2 1639.3,211.5 1649.4,207.6 1659.4,219.7 1669.5,218.0 1679.5,216.1 1689.6,216.7 1699.6,224.6 1709.7,213.7 1719.7,236.8 1729.8,228.1 1739.8,224.8 1749.9,229.5 1759.9,242.4 1770.0,239.1 1780.0,235.6 1790.1,246.2 1800.1,240.2 1810.2,249.0 1820.2,260.6 1830.2,249.4 1840.3,259.1 1850.3,280.4 1860.4,274.6 1870.5,274.6 1880.5,295.0" fill="none" stroke="#18e818" stroke-width="1" stroke-linejoin="round"/><polyline points="744.9,290.2 754.9,287.7 765.0,283.5 775.0,279.5 785.1,288.3 795.1,291.5 805.1,282.6 815.2,269.6 825.2,259.3 835.3,260.6 845.4,257.7 855.4,242.2 865.5,259.0 875.5,263.5 885.6,259.3 895.6,261.6 905.7,272.3 915.7,275.5 925.8,257.4 935.8,265.4 945.9,287.5 955.9,263.2 966.0,231.2 976.0,256.3 986.1,256.3 996.1,237.6 1006.2,235.3 1016.2,231.6 1026.2,227.8 1036.3,254.5 1046.3,235.3 1056.4,244.6 1066.5,249.4 1076.5,240.3 1086.6,256.6 1096.6,247.2 1106.7,227.2 1116.7,246.5 1126.8,246.5 1136.8,230.1 1146.8,242.4 1156.9,240.6 1167.0,221.0 1177.0,221.0 1187.1,221.6 1197.1,218.2 1207.2,231.2 1217.2,232.5 1227.2,223.2 1237.3,234.4 1247.4,245.6 1257.4,224.6 1267.5,223.5 1277.5,239.5 1287.6,219.4 1297.6,226.4 1307.7,223.7 1317.7,224.7 1327.8,231.6 1337.8,224.4 1347.8,226.0 1357.9,212.4 1368.0,224.4 1378.0,219.0 1388.1,201.2 1398.1,223.3 1408.2,215.6 1418.2,211.4 1428.2,238.8 1438.3,222.2 1448.3,224.6 1458.4,239.8 1468.5,223.3 1478.5,218.5 1488.6,221.5 1498.6,211.6 1508.7,205.5 1518.7,198.3 1528.8,215.3 1538.8,202.3 1548.8,213.5 1558.9,231.3 1569.0,218.3 1579.0,211.4 1589.1,230.4 1599.1,205.5 1609.2,204.9 1619.2,214.3 1629.2,201.5 1639.3,206.9 1649.4,215.9 1659.4,214.3 1669.5,210.4 1679.5,230.4 1689.6,221.0 1699.6,220.4 1709.7,242.9 1719.7,219.5 1729.8,219.1 1739.8,244.0 1749.9,235.6 1759.9,219.7 1770.0,223.4 1780.0,250.3 1790.1,242.4 1800.1,242.2 1810.2,245.9 1820.2,236.5 1830.2,256.0 1840.3,267.3 1850.3,251.4 1860.4,264.4 1870.5,288.4 1880.5,285.0" fill="none" stroke="#1010c8" stroke-width="1" stroke-linejoin="round"/></g></svg>
<div class="lbl" style="left:767px;top:236px">30</div>
<div class="lbl" style="left:767px;top:321px">25</div>
<div class="lbl" style="left:767px;top:405px">20</div>
<div class="lbl" style="left:767px;top:489px">15</div>
<div class="lbl" style="left:767px;top:574px">10</div>
<div class="lbl" style="left:767px;top:658px">5</div>
<div class="a" style="left:753px;top:186px;width:82px;height:1px;background:#000"></div>
<div class="a" style="left:834px;top:180px;width:6px;height:13px;background:#e6e8ee;border-right:1px solid #000;border-bottom:1px solid #000"></div>
<div class="a" style="left:841px;top:186px;width:1px;height:1px;background:#000"></div>
<svg class="a" style="left:746px;top:741px" width="1131" height="10" viewBox="746 741 1131 10" shape-rendering="crispEdges"><defs><pattern id="bp4" x="747" y="744" width="4" height="4" patternUnits="userSpaceOnUse"><rect x="0" y="0" width="1" height="1" fill="#ffffff"/><rect x="1" y="1" width="1" height="1" fill="#858c96"/><rect x="2" y="2" width="1" height="1" fill="#ffffff"/><rect x="3" y="3" width="1" height="1" fill="#858c96"/></pattern></defs><rect x="746" y="741" width="1131" height="10" fill="#f2f2f4"/><rect x="748" y="744" width="1127" height="4" fill="url(#bp4)"/></svg>
<div class="a" style="left:746px;top:751px;width:1131px;height:244px;background:#000"></div>
<div class="a" style="left:746px;top:752px;width:1131px;height:242px;background:#fff"></div>
<div class="a" style="left:836px;top:752px;width:994px;height:242px;background:#ffffcc"></div>
<div class="a" style="left:835px;top:752px;width:1px;height:242px;background:#7c7c66"></div>
<div class="a" style="left:1830px;top:752px;width:1px;height:242px;background:#7c7c66"></div>
<svg class="a" style="left:746px;top:752px" width="1131" height="242" viewBox="746 752 1131 242"><line x1="746" x2="1877" y1="801.5" y2="801.5" stroke="#c0c0c0" stroke-width="1" stroke-dasharray="20 8"/><line x1="746" x2="1877" y1="878.5" y2="878.5" stroke="#c0c0c0" stroke-width="1" stroke-dasharray="20 8"/><line x1="746" x2="1877" y1="956.5" y2="956.5" stroke="#c0c0c0" stroke-width="1" stroke-dasharray="20 8"/><line x1="746" x2="1877" y1="840.5" y2="840.5" stroke="#c4c4c4" stroke-width="1"/><line x1="746" x2="1877" y1="917.5" y2="917.5" stroke="#c4c4c4" stroke-width="1"/><polyline points="744.9,977.1 754.9,977.1 765.0,975.9 775.0,973.2 785.1,974.3 795.1,975.1 805.1,975.4 815.2,976.3 825.2,977.4 835.3,978.5 845.4,977.4 855.4,977.1 865.5,977.1 875.5,976.6 885.6,976.6 895.6,976.6 905.7,976.6 915.7,977.1 925.8,976.6 935.8,978.2 945.9,979.3 955.9,979.3 966.0,979.3 976.0,979.7 986.1,979.0 996.1,978.5 1006.2,978.2 1016.2,977.7 1026.2,977.1 1036.3,976.3 1046.3,977.1 1056.4,977.4 1066.5,977.4 1076.5,977.4 1086.6,978.2 1096.6,979.0 1106.7,979.0 1116.7,979.0 1126.8,978.2 1136.8,978.5 1146.8,979.3 1156.9,980.2 1167.0,979.3 1177.0,978.5 1187.1,975.4 1197.1,974.3 1207.2,975.9 1217.2,976.3 1227.2,976.3 1237.3,976.3 1247.4,977.1 1257.4,978.2 1267.5,979.0 1277.5,977.1 1287.6,977.1 1297.6,976.3 1307.7,978.2 1317.7,978.5 1327.8,976.6 1337.8,975.4 1347.8,975.1 1357.9,976.3 1368.0,978.5 1378.0,979.7 1388.1,978.2 1398.1,977.1 1408.2,975.9 1418.2,975.1 1428.2,975.4 1438.3,976.3 1448.3,976.3 1458.4,978.2 1468.5,978.5 1478.5,977.7 1488.6,976.6 1498.6,977.1 1508.7,977.4 1518.7,978.5 1528.8,978.2 1538.8,979.3 1548.8,978.2 1558.9,979.0 1569.0,978.5 1579.0,979.0 1589.1,979.0 1599.1,979.6 1609.2,979.3 1619.2,978.8 1629.2,978.4 1639.3,977.9 1649.4,977.9 1659.4,977.9 1669.5,977.7 1679.5,977.8 1689.6,978.5 1699.6,977.9 1709.7,977.7 1719.7,975.8 1729.8,976.0 1739.8,975.8 1749.9,976.1 1759.9,976.4 1770.0,979.4 1780.0,978.7 1790.1,978.4 1800.1,977.9 1810.2,978.4 1820.2,976.7 1830.2,976.4 1840.3,974.4 1850.3,975.2 1860.4,975.4 1870.5,976.0 1880.5,978.0" fill="none" stroke="#e01818" stroke-width="1.2" stroke-linejoin="round"/><polyline points="744.9,979.3 754.9,979.3 765.0,979.3 775.0,979.0 785.1,978.5 795.1,979.3 805.1,979.3 815.2,978.6 825.2,978.2 835.3,977.1 845.4,976.6 855.4,977.1 865.5,977.4 875.5,977.1 885.6,979.0 895.6,979.3 905.7,979.7 915.7,979.0 925.8,979.0 935.8,979.7 945.9,980.0 955.9,980.0 966.0,980.0 976.0,980.0 986.1,979.3 996.1,979.0 1006.2,978.2 1016.2,978.2 1026.2,979.7 1036.3,979.3 1046.3,979.3 1056.4,978.2 1066.5,977.7 1076.5,978.2 1086.6,979.0 1096.6,979.3 1106.7,979.0 1116.7,978.5 1126.8,978.2 1136.8,979.0 1146.8,979.7 1156.9,979.7 1167.0,979.3 1177.0,979.0 1187.1,978.2 1197.1,979.0 1207.2,979.3 1217.2,979.3 1227.2,979.0 1237.3,979.3 1247.4,977.7 1257.4,979.0 1267.5,979.3 1277.5,980.2 1287.6,980.5 1297.6,980.8 1307.7,980.2 1317.7,980.2 1327.8,979.3 1337.8,979.0 1347.8,979.0 1357.9,980.2 1368.0,978.2 1378.0,979.3 1388.1,979.0 1398.1,979.0 1408.2,979.3 1418.2,978.5 1428.2,977.4 1438.3,978.2 1448.3,979.3 1458.4,975.9 1468.5,977.4 1478.5,978.2 1488.6,978.5 1498.6,979.0 1508.7,980.2 1518.7,979.0 1528.8,977.4 1538.8,976.6 1548.8,978.2 1558.9,979.0 1569.0,978.5 1579.0,978.5 1589.1,977.9 1599.1,979.3 1609.2,978.5 1619.2,978.7 1629.2,980.5 1639.3,979.9 1649.4,978.8 1659.4,980.2 1669.5,979.8 1679.5,979.3 1689.6,979.0 1699.6,976.1 1709.7,982.9 1719.7,982.8 1729.8,980.8 1739.8,982.9 1749.9,984.9 1759.9,982.3 1770.0,984.6 1780.0,983.5 1790.1,982.9 1800.1,983.1 1810.2,981.1 1820.2,978.2 1830.2,979.6 1840.3,984.0 1850.3,986.3 1860.4,979.5 1870.5,976.0 1880.5,978.8" fill="none" stroke="#20d820" stroke-width="1.2" stroke-linejoin="round"/><polyline points="744.9,974.3 754.9,975.4 765.0,975.9 775.0,973.2 785.1,971.2 795.1,971.2 805.1,974.3 815.2,974.6 825.2,972.3 835.3,972.3 845.4,976.6 855.4,980.2 865.5,978.2 875.5,977.1 885.6,976.6 895.6,976.6 905.7,976.6 915.7,977.1 925.8,975.9 935.8,973.2 945.9,972.3 955.9,973.2 966.0,973.2 976.0,974.3 986.1,974.3 996.1,973.2 1006.2,972.3 1016.2,974.3 1026.2,974.2 1036.3,973.2 1046.3,973.2 1056.4,973.2 1066.5,973.2 1076.5,973.2 1086.6,978.5 1096.6,976.3 1106.7,976.3 1116.7,976.3 1126.8,976.3 1136.8,974.3 1146.8,974.3 1156.9,974.3 1167.0,974.3 1177.0,973.2 1187.1,972.3 1197.1,973.2 1207.2,973.2 1217.2,979.0 1227.2,978.2 1237.3,974.3 1247.4,973.2 1257.4,975.1 1267.5,979.7 1277.5,973.5 1287.6,974.3 1297.6,971.2 1307.7,972.2 1317.7,974.3 1327.8,969.2 1337.8,968.4 1347.8,969.2 1357.9,969.2 1368.0,972.3 1378.0,973.5 1388.1,974.6 1398.1,974.3 1408.2,972.0 1418.2,970.9 1428.2,971.2 1438.3,972.3 1448.3,972.3 1458.4,974.6 1468.5,975.1 1478.5,970.9 1488.6,972.0 1498.6,974.3 1508.7,973.2 1518.7,973.2 1528.8,970.9 1538.8,973.2 1548.8,973.2 1558.9,975.4 1569.0,974.3 1579.0,975.1 1589.1,976.9 1599.1,975.6 1609.2,975.6 1619.2,976.4 1629.2,974.6 1639.3,974.5 1649.4,973.9 1659.4,972.8 1669.5,974.9 1679.5,974.8 1689.6,974.5 1699.6,976.0 1709.7,976.4 1719.7,976.1 1729.8,976.4 1739.8,974.8 1749.9,974.9 1759.9,975.6 1770.0,975.5 1780.0,976.6 1790.1,974.5 1800.1,973.2 1810.2,972.6 1820.2,971.0 1830.2,974.0 1840.3,973.6 1850.3,974.8 1860.4,975.3 1870.5,975.0 1880.5,973.0" fill="none" stroke="#2020c0" stroke-width="1.2" stroke-linejoin="round"/></svg>
<div class="lbl" style="left:766px;top:803px">2.5</div>
<div class="lbl" style="left:766px;top:842px">2.0</div>
<div class="lbl" style="left:766px;top:880px">1.5</div>
<div class="lbl" style="left:766px;top:919px">1.0</div>
<div class="lbl" style="left:766px;top:958px">0.5</div>
<div class="a" style="left:746px;top:995px;width:1131px;height:15px;background:#eee"></div>
<div class="a" style="left:746px;top:995px;width:15px;height:15px;background:#fafafa"></div>
<div class="a" style="left:761px;top:995px;width:1px;height:15px;background:#7c8791"></div>
<div class="a" style="left:746px;top:995px;width:1px;height:15px;background:#7c8791"></div>
<svg class="a" style="left:746px;top:995px" width="16" height="16"><polygon points="9,3 9,12 4.5,7.500" fill="#1a1a1a"/></svg>
<div class="a" style="left:746px;top:1010px;width:1131px;height:1px;background:#7c8791"></div>
<div class="a" style="left:1636px;top:995px;width:16px;height:15px;background:linear-gradient(#dbe6f3,#ffffff 30%,#c4d6ea);border:1px solid #7f94b4;box-sizing:border-box"></div>
<div class="a" style="left:1641px;top:999px;width:1px;height:7px;background:#5070a0"></div>
<div class="a" style="left:1643px;top:999px;width:1px;height:7px;background:#5070a0"></div>
<div class="a" style="left:1645px;top:999px;width:1px;height:7px;background:#5070a0"></div>
<div class="a" style="left:0;top:1011px;width:1877px;height:18px;background:#eeeeee"></div>
<div class="a b" style="left:0px;top:1015px;line-height:15px;white-space:pre" id="status">10.0 s (1) 30.132 +/- 0.266 kn  10.0 s (2) 30.197 +/- 0.223 kn  10.0 s (3) 30.204 +/- 0.200 kn</div>
<div class="a" style="left:0;top:1029px;width:1877px;height:3px;background:#dde7ee"></div>
<div class="a" style="left:491px;top:1029px;width:842px;height:3px;background:#e6edf2"></div>
<div class="a" style="left:1333px;top:1029px;width:42px;height:3px;background:#fbfcfd"></div>
<div class="a" style="left:1375px;top:1029px;width:502px;height:3px;background:#d8e0e7"></div>
<div class="a" style="left:61px;top:1029px;width:430px;height:3px;background:#f8f9fa"></div>
<div class="a" style="left:61px;top:1029px;width:430px;height:1px;background:#d0d2d4"></div>
</body></html>
